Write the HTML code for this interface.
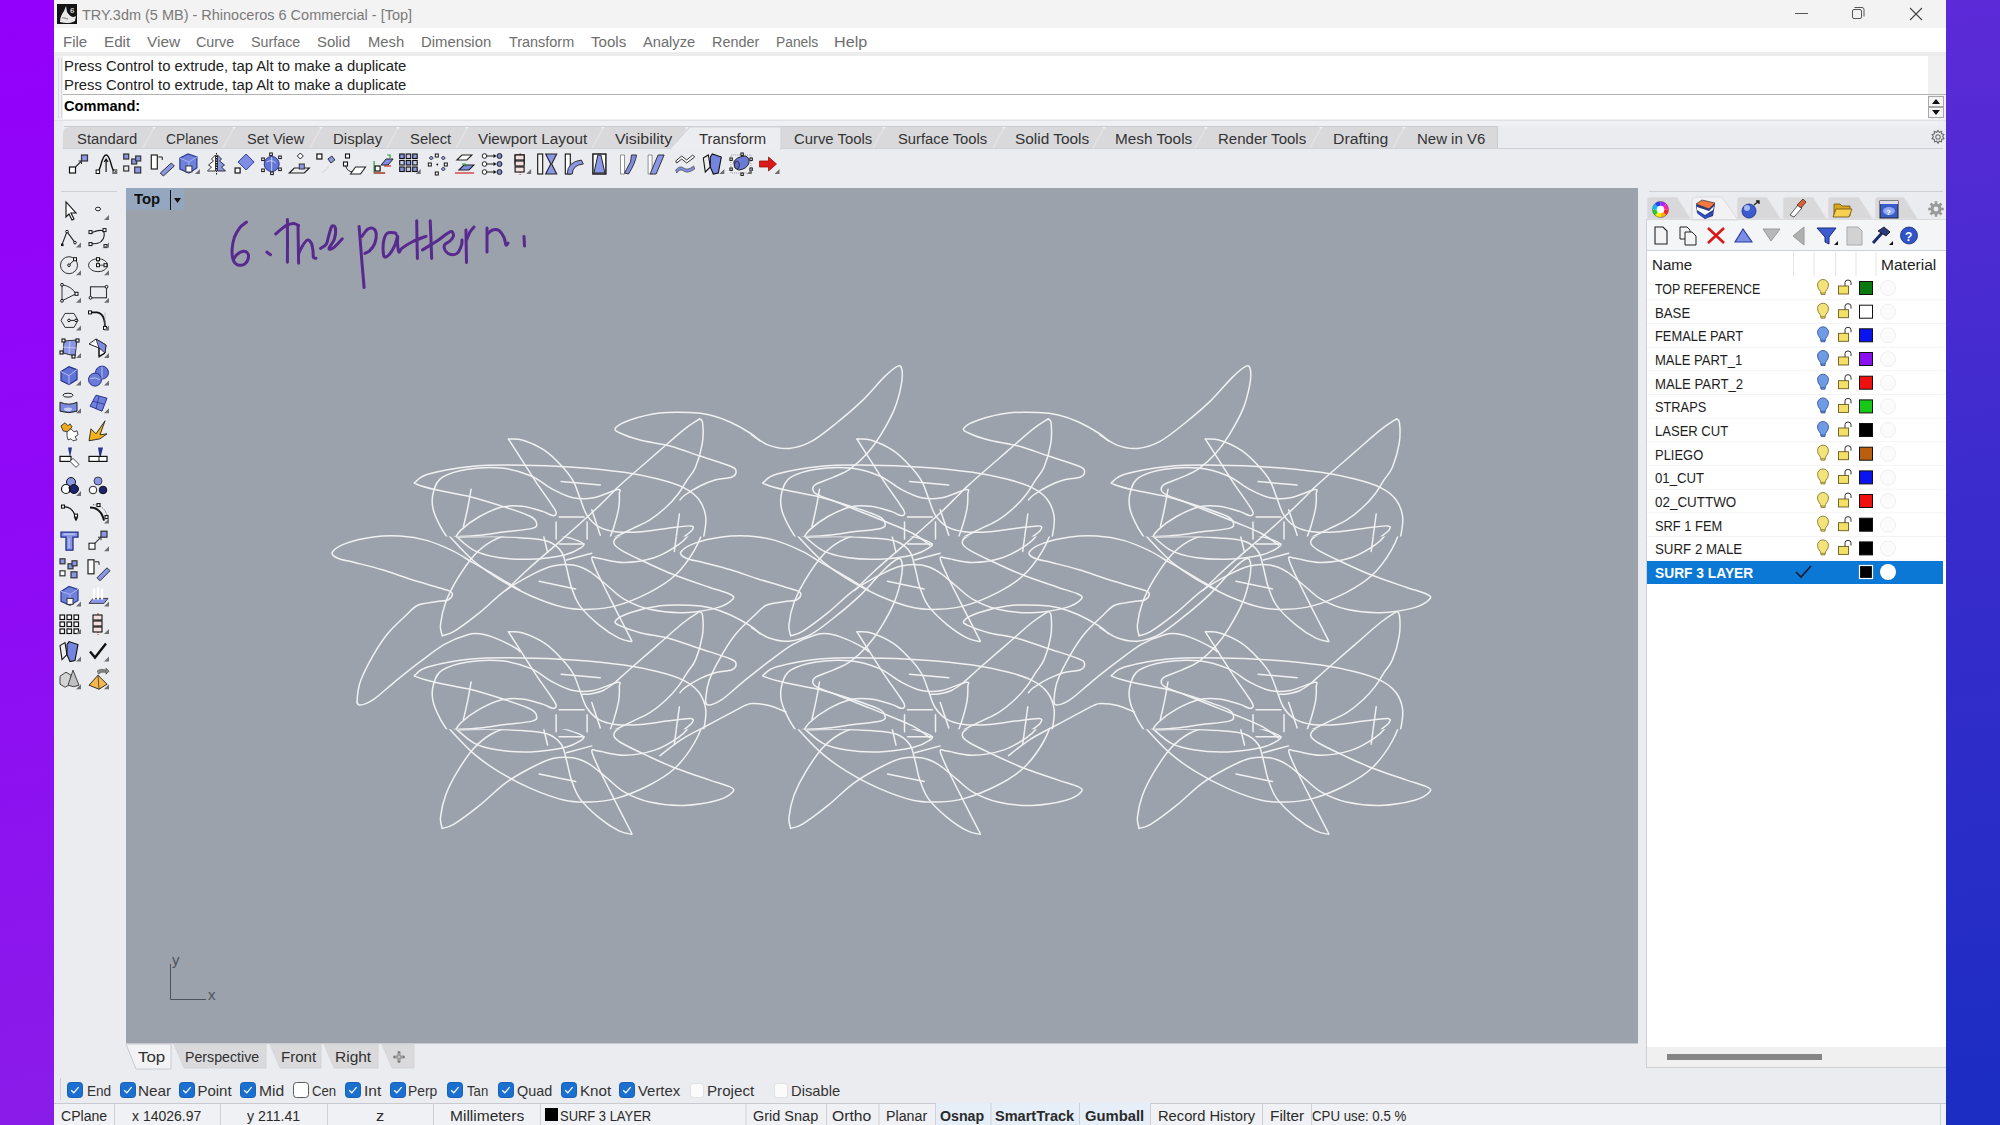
<!DOCTYPE html>
<html><head><meta charset="utf-8">
<style>
*{box-sizing:border-box}
html,body{margin:0;padding:0}
body{width:2000px;height:1125px;overflow:hidden;position:relative;background:#ebecf0;font-family:'Liberation Sans',sans-serif}
.a{position:absolute}
.t{position:absolute;white-space:pre;line-height:1;transform-origin:0 0;font-family:'Liberation Sans',sans-serif}
svg{position:absolute;overflow:visible}
</style></head><body>
<!-- borders -->
<div class="a" style="left:0;top:0;width:54px;height:1125px;background:linear-gradient(170deg,#9300fb 0%,#8f0af6 50%,#8a1ce8 100%)"></div>
<div class="a" style="left:1946px;top:0;width:54px;height:1125px;background:linear-gradient(175deg,#5d2ad8 0%,#3a2ccc 45%,#1a2dc2 100%)"></div>
<!-- title bar -->
<div class="a" style="left:54px;top:0;width:1892px;height:28px;background:#f3f3f3"></div>
<!-- menu -->
<div class="a" style="left:54px;top:28px;width:1892px;height:24px;background:#ffffff"></div>
<div class="a" style="left:54px;top:52px;width:1892px;height:4px;background:#ececec"></div>
<!-- command area -->
<div class="a" style="left:54px;top:56px;width:1892px;height:64px;background:#eef0f4"></div>
<div class="a" style="left:63px;top:56px;width:1865px;height:38px;background:#ffffff"></div>
<div class="a" style="left:1928px;top:56px;width:18px;height:38px;background:#f0f0f0"></div>
<div class="a" style="left:63px;top:94px;width:1883px;height:1px;background:#b2b2b2"></div>
<div class="a" style="left:63px;top:95px;width:1865px;height:24px;background:#ffffff"></div>
<div class="a" style="left:58px;top:58px;width:1px;height:60px;background:#d8d8e0"></div>
<div class="a" style="left:61px;top:58px;width:1px;height:60px;background:#d8d8e0"></div>
<!-- toolbar tabs strip -->
<div class="a" style="left:54px;top:120px;width:1892px;height:68px;background:#ebecf0"></div>
<div class="a" style="left:63px;top:148px;width:1880px;height:1px;background:#d6d6d8"></div>
<svg style="left:0;top:0" width="2000" height="1125"><rect x="54" y="120" width="1892" height="1" fill="#dfe1e6"/><rect x="63" y="121" width="1880" height="5" fill="#eef0f4"/><rect x="64" y="126" width="1434" height="1" fill="#c9cbd0"/><path d="M63 148 L63 133 Q64 127 70 127 H1498 V148 Z" fill="#d9d9dc"/><path d="M143 148 L154 128" stroke="#e2e2e5" stroke-width="1.6"/><path d="M152 127 L154 129 L156 127 Z" fill="#eef0f4"/><path d="M223 148 L234 128" stroke="#e2e2e5" stroke-width="1.6"/><path d="M232 127 L234 129 L236 127 Z" fill="#eef0f4"/><path d="M310 148 L321 128" stroke="#e2e2e5" stroke-width="1.6"/><path d="M319 127 L321 129 L323 127 Z" fill="#eef0f4"/><path d="M387 148 L398 128" stroke="#e2e2e5" stroke-width="1.6"/><path d="M396 127 L398 129 L400 127 Z" fill="#eef0f4"/><path d="M456 148 L467 128" stroke="#e2e2e5" stroke-width="1.6"/><path d="M465 127 L467 129 L469 127 Z" fill="#eef0f4"/><path d="M592 148 L603 128" stroke="#e2e2e5" stroke-width="1.6"/><path d="M601 127 L603 129 L605 127 Z" fill="#eef0f4"/><path d="M676 148 L687 128" stroke="#e2e2e5" stroke-width="1.6"/><path d="M685 127 L687 129 L689 127 Z" fill="#eef0f4"/><path d="M873 148 L884 128" stroke="#e2e2e5" stroke-width="1.6"/><path d="M882 127 L884 129 L886 127 Z" fill="#eef0f4"/><path d="M993 148 L1004 128" stroke="#e2e2e5" stroke-width="1.6"/><path d="M1002 127 L1004 129 L1006 127 Z" fill="#eef0f4"/><path d="M1093 148 L1104 128" stroke="#e2e2e5" stroke-width="1.6"/><path d="M1102 127 L1104 129 L1106 127 Z" fill="#eef0f4"/><path d="M1195 148 L1206 128" stroke="#e2e2e5" stroke-width="1.6"/><path d="M1204 127 L1206 129 L1208 127 Z" fill="#eef0f4"/><path d="M1310 148 L1321 128" stroke="#e2e2e5" stroke-width="1.6"/><path d="M1319 127 L1321 129 L1323 127 Z" fill="#eef0f4"/><path d="M1393 148 L1404 128" stroke="#e2e2e5" stroke-width="1.6"/><path d="M1402 127 L1404 129 L1406 127 Z" fill="#eef0f4"/><path d="M1497.5 127 V148" stroke="#c9cbd0" stroke-width="1"/><path d="M670 149 L690 127 H781 V149 Z" fill="#ecedf1" stroke="#d0d2d8" stroke-width="1"/><rect x="63" y="148" width="1880" height="1" fill="#cdd0d6"/><rect x="671" y="148" width="109" height="2" fill="#ecedf1"/><g transform="translate(1938 137)" fill="none" stroke="#6b6b6b" stroke-width="1.1"><circle r="2.2"/><path d="M0 -6.5 L1.3 -4.6 L3.6 -5.6 L3.6 -3.2 L5.9 -2.4 L4.6 -0.5 L6 1.6 L3.7 2.4 L3.5 4.8 L1.3 4.2 L0 6.3 L-1.3 4.2 L-3.5 4.8 L-3.7 2.4 L-6 1.6 L-4.6 -0.5 L-5.9 -2.4 L-3.6 -3.2 L-3.6 -5.6 L-1.3 -4.6 Z"/></g></svg>
<!-- viewport -->
<div class="a" style="left:126px;top:188px;width:1512px;height:855px;background:#9ca2ab"></div>
<div class="a" style="left:126px;top:188px;width:58px;height:22px;background:#94a7bf"></div>
<div class="a" style="left:170px;top:190px;width:1px;height:20px;background:#111"></div>
<svg style="left:0;top:0" width="2000" height="1125"><path d="M174 198 L181 198 L177.5 203 Z" fill="#111"/></svg>
<svg style="left:0;top:0" width="2000" height="1125">
<defs><clipPath id="pc0"><rect x="0" y="0.0" width="2000" height="536.5"/></clipPath><clipPath id="pc1"><rect x="0" y="536.5" width="2000" height="588.5"/></clipPath><clipPath id="pc4"><rect x="0" y="0.0" width="2000" height="536.5"/></clipPath><clipPath id="pc5"><rect x="0" y="536.5" width="2000" height="588.5"/></clipPath><clipPath id="pc8"><rect x="0" y="0.0" width="2000" height="536.5"/></clipPath><clipPath id="pc9"><rect x="0" y="536.5" width="2000" height="588.5"/></clipPath><clipPath id="pc12"><rect x="0" y="0.0" width="2000" height="729.2"/></clipPath><clipPath id="pc13"><rect x="0" y="729.2" width="2000" height="395.8"/></clipPath><clipPath id="pc16"><rect x="0" y="0.0" width="2000" height="729.2"/></clipPath><clipPath id="pc17"><rect x="0" y="729.2" width="2000" height="395.8"/></clipPath><clipPath id="pc20"><rect x="0" y="0.0" width="2000" height="729.2"/></clipPath><clipPath id="pc21"><rect x="0" y="729.2" width="2000" height="395.8"/></clipPath><clipPath id="vpc"><rect x="126" y="188" width="1512" height="855"/></clipPath></defs>
<g clip-path="url(#vpc)">
<g fill="none" stroke="#f0f1f3" stroke-width="1.5" stroke-linecap="round" stroke-linejoin="round"><g clip-path="url(#pc0)"><path d="M508.5 439.1 C510.8 439.3 516.2 438.2 522.1 440.0 C528.0 441.8 537.7 445.9 544.2 450.2 C550.7 454.4 556.4 460.4 561.2 465.5 C566.0 470.6 570.0 475.4 573.1 480.8 C576.2 486.2 577.6 492.1 579.9 497.8 C582.2 503.5 583.6 510.0 586.7 514.8 C589.8 519.6 593.8 523.9 598.6 526.7 C603.4 529.5 608.5 530.9 615.6 531.8 C622.7 532.6 632.6 532.4 641.1 531.8 C649.6 531.2 658.4 529.4 666.6 528.4 C674.8 527.4 686.1 525.6 690.4 525.9 C694.6 526.1 693.5 528.0 692.1 530.1 C690.7 532.2 684.7 536.1 681.9 538.6 C679.1 541.1 676.2 544.0 675.1 545.1"/><path d="M508.5 439.1 C510.8 442.7 517.3 452.9 522.1 460.4 C526.9 467.9 532.9 477.4 537.4 484.2 C541.9 491.0 546.2 496.5 549.3 501.2 C552.4 505.9 555.5 509.8 556.1 512.2 C556.7 514.7 555.0 515.8 552.7 515.6 C550.4 515.5 547.6 513.0 542.5 511.4 C537.4 509.8 528.9 507.0 522.1 506.3 C515.3 505.6 508.8 505.4 501.7 507.1 C494.6 508.8 486.4 512.7 479.6 516.5 C472.8 520.3 465.1 526.1 460.9 530.1 C456.6 534.1 455.2 538.6 454.1 540.3"/><path d="M454.1 536.9 C458.4 536.6 471.1 536.1 479.6 535.2 C488.1 534.4 496.3 532.9 505.1 531.8 C513.9 530.7 527.1 529.8 532.3 528.4 C537.5 527.0 536.8 525.3 536.6 523.3 C536.3 521.3 535.8 519.2 530.6 516.5 C525.4 513.8 515.0 510.4 505.1 507.1 C495.2 503.9 482.4 499.8 471.1 496.9 C459.8 494.1 446.2 492.3 437.1 490.1 C428.0 488.0 420.2 485.6 416.7 484.2 C413.2 482.8 413.9 483.3 415.9 481.6 C417.8 479.9 419.4 476.6 428.6 474.0 C437.8 471.4 455.5 467.8 471.1 466.4 C486.7 464.9 505.1 465.0 522.1 465.2 C539.1 465.3 556.1 466.0 573.1 467.2 C590.1 468.4 609.9 470.3 624.1 472.3 C638.3 474.3 648.2 476.6 658.1 479.1 C668.0 481.7 676.8 484.2 683.6 487.6 C690.4 491.0 695.2 494.7 698.9 499.5 C702.6 504.3 704.8 510.6 705.7 516.5 C706.5 522.5 704.9 530.4 704.0 535.2 C703.2 540.0 701.2 543.4 700.6 545.1"/><path d="M452.4 545.1 C450.4 542.0 443.8 532.9 440.5 526.7 C437.2 520.5 434.0 514.0 432.9 508.0 C431.7 502.1 432.1 496.1 433.7 491.0 C435.3 485.9 436.5 481.0 442.2 477.4 C447.9 473.8 457.8 470.8 467.7 469.2 C477.6 467.7 491.2 467.0 501.7 468.1 C512.2 469.1 522.1 472.2 530.6 475.7 C539.1 479.2 545.6 485.6 552.7 489.3 C559.8 493.0 566.3 496.4 573.1 497.8 C579.9 499.2 586.0 499.2 593.5 497.8 C601.0 496.4 613.5 490.2 617.8 489.6 C622.1 489.1 619.2 491.3 619.3 494.4 C619.5 497.5 619.6 502.6 618.7 508.0 C617.8 513.4 615.8 520.5 613.9 526.7 C612.0 532.9 608.2 542.0 607.1 545.1"/><path d="M699.8 418.8 C697.1 420.6 690.5 424.3 683.6 429.8 C676.7 435.3 666.6 444.5 658.1 451.9 C649.6 459.3 639.7 467.8 632.6 474.0 C625.5 480.2 618.4 486.7 615.6 489.3"/><path d="M699.8 418.8 C700.2 419.5 702.2 418.9 702.6 423.0 C703.1 427.1 703.5 436.0 702.3 443.4 C701.1 450.8 698.1 461.1 695.5 467.2 C693.0 473.3 689.9 475.7 687.0 480.1 C684.1 484.5 681.8 489.2 678.3 493.7 C674.8 498.3 670.7 503.0 665.9 507.3 C661.2 511.7 655.5 516.4 649.9 519.9 C644.4 523.4 638.3 525.7 632.4 528.6 C626.6 531.5 618.7 535.3 614.9 537.2 C611.2 539.2 611.9 539.0 610.0 540.3 C608.1 541.6 604.7 544.3 603.7 545.1"/><path d="M471.1 489.3 C470.5 492.4 469.0 501.8 467.7 508.0 C466.4 514.2 464.2 523.6 463.4 526.7"/><path d="M561.2 481.6 L600.3 485.0"/><path d="M591.8 509.7 L600.3 535.2"/><path d="M679.4 514.0 L675.1 545.1"/></g><g clip-path="url(#pc1)"><path d="M433.7 507.3 C434.8 510.1 437.1 518.6 440.5 524.3 C443.9 530.0 448.4 535.1 454.1 541.3 C459.8 547.5 467.1 555.5 474.5 561.7 C481.9 567.9 489.0 573.0 498.3 578.7 C507.7 584.4 519.6 590.9 530.6 595.7 C541.6 600.5 554.7 605.3 564.6 607.6 C574.5 609.9 581.6 609.6 590.1 609.3 C598.6 609.0 605.7 608.7 615.6 605.9 C625.5 603.1 639.7 597.4 649.6 592.3 C659.5 587.2 667.6 582.4 675.1 575.3 C682.6 568.2 689.7 558.3 694.6 549.8 C699.6 541.3 702.9 531.4 704.9 524.3 C706.8 517.2 706.3 510.1 706.6 507.3"/><path d="M459.2 534.5 C462.6 532.5 471.9 525.7 479.6 522.6 C487.3 519.5 497.4 516.6 505.1 515.8 C512.8 514.9 520.4 516.2 525.5 517.5 C530.6 518.8 534.4 521.5 535.7 523.5 C537.0 525.4 536.8 527.8 533.1 529.4 C529.5 531.0 520.5 530.8 513.6 532.8 C506.7 534.8 498.0 537.6 491.5 541.3 C485.0 545.0 480.2 548.7 474.5 554.9 C468.8 561.1 462.3 570.8 457.5 578.7 C452.7 586.6 448.4 594.9 445.6 602.5 C442.8 610.1 441.1 619.1 440.5 624.6 C439.9 630.1 441.9 633.8 442.2 635.7"/><path d="M442.2 635.7 C444.2 634.9 447.9 635.2 454.1 631.4 C460.3 627.6 471.1 619.5 479.6 612.7 C488.1 605.9 496.6 596.8 505.1 590.6 C513.6 584.4 522.7 579.4 530.6 575.3 C538.5 571.2 545.6 567.7 552.7 566.0 C559.8 564.2 566.9 564.1 573.1 565.1 C579.3 566.1 584.4 568.5 590.1 571.9 C595.8 575.3 601.4 581.0 607.1 585.5 C612.8 590.0 617.0 595.1 624.1 599.1 C631.2 603.1 639.7 607.0 649.6 609.3 C659.5 611.6 672.3 613.0 683.6 612.7 C694.9 612.4 709.4 609.9 717.6 607.6 C725.8 605.3 730.9 601.4 732.9 599.1 C734.9 596.8 733.5 596.0 729.5 594.0 C725.5 592.0 718.2 590.3 709.1 587.2 C700.0 584.1 685.9 579.5 675.1 575.3 C664.3 571.0 653.6 566.0 644.5 561.7 C635.4 557.5 625.8 552.9 620.7 549.8 C615.6 546.7 614.2 545.3 613.9 543.0 C613.6 540.7 614.5 538.2 619.0 536.2 C623.5 534.2 633.2 532.5 641.1 531.1 C649.0 529.7 658.1 528.6 666.6 527.7 C675.1 526.9 687.9 526.3 692.1 526.0"/><path d="M692.1 526.0 C691.8 527.1 692.7 529.7 690.4 532.8 C688.1 535.9 684.5 540.6 678.5 544.7 C672.6 548.8 663.8 554.5 654.7 557.5 C645.6 560.4 633.5 562.4 624.1 562.5 C614.8 562.7 604.0 559.0 598.6 558.3 C593.2 557.6 591.8 555.5 591.8 558.3 C591.8 561.1 594.6 566.8 598.6 575.3 C602.6 583.8 610.1 598.4 615.6 609.3 C621.1 620.2 629.1 635.5 631.8 640.8"/><path d="M459.2 537.0 C464.0 537.0 477.6 536.4 488.1 536.5 C498.6 536.7 512.2 537.1 522.1 537.9 C532.0 538.7 541.1 539.0 547.6 541.3 C554.1 543.6 558.1 547.2 561.2 551.5 C564.3 555.8 564.6 560.8 566.3 566.8 C568.0 572.8 569.1 580.7 571.4 587.2 C573.7 593.7 575.4 599.7 579.9 605.9 C584.4 612.1 592.1 619.2 598.6 624.6 C605.1 630.0 613.5 635.4 619.0 638.2 C624.5 641.0 629.6 641.0 631.8 641.6"/><path d="M403.1 510.7 C405.9 510.9 414.4 510.6 420.1 512.1 C425.8 513.5 431.4 515.5 437.1 519.2 C442.8 522.9 447.9 529.3 454.1 534.5 C460.3 539.7 467.1 546.8 474.5 550.7 C481.9 554.5 489.0 556.0 498.3 557.5 C507.7 558.9 519.6 559.6 530.6 559.2 C541.6 558.7 556.1 556.9 564.6 554.9 C573.1 552.9 578.6 549.2 581.6 547.2 C584.6 545.3 584.4 544.6 582.4 543.0 C580.5 541.4 576.9 540.2 569.7 537.9 C562.5 535.6 549.3 532.5 539.1 529.4 C528.9 526.3 517.6 522.3 508.5 519.2 C499.4 516.1 490.4 512.7 484.7 510.7 C479.0 508.7 476.2 507.9 474.5 507.3"/><path d="M464.3 507.3 L462.6 526.0"/><path d="M539.1 581.2 L575.6 588.9"/><path d="M566.3 560.0 L591.8 553.2"/><path d="M541.6 527.7 L547.6 552.3"/><path d="M591.8 510.7 L600.3 535.3"/><path d="M679.4 514.1 L674.3 551.5"/><path d="M579.9 507.3 C581.6 509.6 585.6 517.2 590.1 520.9 C594.6 524.6 600.9 527.7 607.1 529.4 C613.3 531.1 620.4 531.9 627.5 531.1 C634.6 530.2 643.1 527.4 649.6 524.3 C656.1 521.2 662.4 515.2 666.6 512.4 C670.9 509.6 673.7 508.2 675.1 507.3"/></g><path d="M559.1 517.0 L584.1 517.0"/><path d="M559.1 544.0 L584.1 544.0"/><path d="M556.1 522.0 L556.1 539.0"/><path d="M587.1 522.0 L587.1 539.0"/><path d="M615.6 489.5 C614.3 490.8 611.9 493.3 607.6 497.5 C603.3 501.7 599.0 506.3 590.0 514.5 C581.0 522.7 564.2 537.6 553.6 546.9 C543.0 556.2 534.5 563.2 526.6 570.5 C518.7 577.8 509.4 587.2 506.0 590.5"/><g clip-path="url(#pc4)"><path d="M857.0 439.1 C859.2 439.3 864.6 438.2 870.5 440.0 C876.5 441.8 886.1 445.9 892.6 450.2 C899.2 454.4 904.8 460.4 909.6 465.5 C914.5 470.6 918.4 475.4 921.5 480.8 C924.7 486.2 926.1 492.1 928.3 497.8 C930.6 503.5 932.0 510.0 935.1 514.8 C938.3 519.6 942.2 523.9 947.0 526.7 C951.9 529.5 957.0 530.9 964.0 531.8 C971.1 532.6 981.0 532.4 989.5 531.8 C998.0 531.2 1006.8 529.4 1015.0 528.4 C1023.3 527.4 1034.6 525.6 1038.8 525.9 C1043.1 526.1 1042.0 528.0 1040.5 530.1 C1039.1 532.2 1033.2 536.1 1030.3 538.6 C1027.5 541.1 1024.7 544.0 1023.5 545.1"/><path d="M857.0 439.1 C859.2 442.7 865.7 452.9 870.5 460.4 C875.4 467.9 881.3 477.4 885.8 484.2 C890.4 491.0 894.6 496.5 897.8 501.2 C900.9 505.9 904.0 509.8 904.5 512.2 C905.1 514.7 903.4 515.8 901.1 515.6 C898.9 515.5 896.1 513.0 891.0 511.4 C885.9 509.8 877.4 507.0 870.5 506.3 C863.7 505.6 857.2 505.4 850.1 507.1 C843.1 508.8 834.8 512.7 828.0 516.5 C821.2 520.3 813.6 526.1 809.3 530.1 C805.1 534.1 803.7 538.6 802.5 540.3"/><path d="M802.5 536.9 C806.8 536.6 819.5 536.1 828.0 535.2 C836.5 534.4 844.8 532.9 853.5 531.8 C862.3 530.7 875.5 529.8 880.8 528.4 C886.0 527.0 885.3 525.3 885.0 523.3 C884.7 521.3 884.3 519.2 879.0 516.5 C873.8 513.8 863.5 510.4 853.5 507.1 C843.6 503.9 830.9 499.8 819.5 496.9 C808.2 494.1 794.6 492.3 785.5 490.1 C776.5 488.0 768.7 485.6 765.1 484.2 C761.6 482.8 762.3 483.3 764.3 481.6 C766.3 479.9 767.8 476.6 777.0 474.0 C786.3 471.4 804.0 467.8 819.5 466.4 C835.1 464.9 853.5 465.0 870.5 465.2 C887.5 465.3 904.5 466.0 921.5 467.2 C938.5 468.4 958.4 470.3 972.5 472.3 C986.7 474.3 996.6 476.6 1006.5 479.1 C1016.5 481.7 1025.2 484.2 1032.0 487.6 C1038.8 491.0 1043.7 494.7 1047.3 499.5 C1051.0 504.3 1053.3 510.6 1054.1 516.5 C1055.0 522.5 1053.3 530.4 1052.5 535.2 C1051.6 540.0 1049.6 543.4 1049.0 545.1"/><path d="M800.8 545.1 C798.9 542.0 792.2 532.9 789.0 526.7 C785.7 520.5 782.4 514.0 781.3 508.0 C780.2 502.1 780.6 496.1 782.1 491.0 C783.7 485.9 785.0 481.0 790.6 477.4 C796.3 473.8 806.2 470.8 816.1 469.2 C826.1 467.7 839.7 467.0 850.1 468.1 C860.6 469.1 870.5 472.2 879.0 475.7 C887.5 479.2 894.1 485.6 901.1 489.3 C908.2 493.0 914.7 496.4 921.5 497.8 C928.4 499.2 934.5 499.2 942.0 497.8 C949.4 496.4 962.0 490.2 966.3 489.6 C970.6 489.1 967.6 491.3 967.8 494.4 C967.9 497.5 968.0 502.6 967.1 508.0 C966.2 513.4 964.3 520.5 962.3 526.7 C960.4 532.9 956.7 542.0 955.5 545.1"/><path d="M1048.2 418.8 C1045.5 420.6 1039.0 424.3 1032.0 429.8 C1025.1 435.3 1015.0 444.5 1006.5 451.9 C998.0 459.3 988.1 467.8 981.0 474.0 C974.0 480.2 966.9 486.7 964.0 489.3"/><path d="M1048.2 418.8 C1048.7 419.5 1050.7 418.9 1051.1 423.0 C1051.5 427.1 1051.9 436.0 1050.8 443.4 C1049.6 450.8 1046.5 461.1 1044.0 467.2 C1041.4 473.3 1038.3 475.7 1035.5 480.1 C1032.6 484.5 1030.3 489.2 1026.8 493.7 C1023.3 498.3 1019.1 503.0 1014.4 507.3 C1009.6 511.7 1004.0 516.4 998.4 519.9 C992.8 523.4 986.7 525.7 980.9 528.6 C975.0 531.5 967.1 535.3 963.4 537.2 C959.6 539.2 960.3 539.0 958.4 540.3 C956.6 541.6 953.2 544.3 952.1 545.1"/><path d="M819.5 489.3 C819.0 492.4 817.4 501.8 816.1 508.0 C814.9 514.2 812.6 523.6 811.9 526.7"/><path d="M909.6 481.6 L948.8 485.0"/><path d="M940.2 509.7 L948.8 535.2"/><path d="M1027.8 514.0 L1023.5 545.1"/></g><g clip-path="url(#pc5)"><path d="M782.1 507.3 C783.3 510.1 785.6 518.6 789.0 524.3 C792.4 530.0 796.9 535.1 802.5 541.3 C808.2 547.5 815.6 555.5 823.0 561.7 C830.3 567.9 837.4 573.0 846.8 578.7 C856.1 584.4 868.0 590.9 879.0 595.7 C890.1 600.5 903.1 605.3 913.0 607.6 C923.0 609.9 930.0 609.6 938.5 609.3 C947.0 609.0 954.1 608.7 964.0 605.9 C974.0 603.1 988.1 597.4 998.0 592.3 C1008.0 587.2 1016.0 582.4 1023.5 575.3 C1031.1 568.2 1038.1 558.3 1043.1 549.8 C1048.1 541.3 1051.3 531.4 1053.3 524.3 C1055.3 517.2 1054.7 510.1 1055.0 507.3"/><path d="M807.6 534.5 C811.0 532.5 820.4 525.7 828.0 522.6 C835.7 519.5 845.9 516.6 853.5 515.8 C861.2 514.9 868.9 516.2 874.0 517.5 C879.1 518.8 882.9 521.5 884.1 523.5 C885.4 525.4 885.3 527.8 881.6 529.4 C877.9 531.0 869.0 530.8 862.0 532.8 C855.1 534.8 846.5 537.6 840.0 541.3 C833.4 545.0 828.6 548.7 823.0 554.9 C817.3 561.1 810.8 570.8 806.0 578.7 C801.1 586.6 796.9 594.9 794.0 602.5 C791.2 610.1 789.5 619.1 789.0 624.6 C788.4 630.1 790.4 633.8 790.6 635.7"/><path d="M790.6 635.7 C792.6 634.9 796.3 635.2 802.5 631.4 C808.8 627.6 819.5 619.5 828.0 612.7 C836.5 605.9 845.0 596.8 853.5 590.6 C862.0 584.4 871.1 579.4 879.0 575.3 C887.0 571.2 894.1 567.7 901.1 566.0 C908.2 564.2 915.3 564.1 921.5 565.1 C927.8 566.1 932.9 568.5 938.5 571.9 C944.2 575.3 949.9 581.0 955.5 585.5 C961.2 590.0 965.5 595.1 972.5 599.1 C979.6 603.1 988.1 607.0 998.0 609.3 C1008.0 611.6 1020.7 613.0 1032.0 612.7 C1043.4 612.4 1057.8 609.9 1066.0 607.6 C1074.3 605.3 1079.4 601.4 1081.3 599.1 C1083.3 596.8 1081.9 596.0 1078.0 594.0 C1074.0 592.0 1066.6 590.3 1057.5 587.2 C1048.5 584.1 1034.3 579.5 1023.5 575.3 C1012.8 571.0 1002.0 566.0 993.0 561.7 C983.9 557.5 974.2 552.9 969.1 549.8 C964.0 546.7 962.6 545.3 962.3 543.0 C962.1 540.7 962.9 538.2 967.5 536.2 C972.0 534.2 981.6 532.5 989.5 531.1 C997.5 529.7 1006.5 528.6 1015.0 527.7 C1023.5 526.9 1036.3 526.3 1040.5 526.0"/><path d="M1040.5 526.0 C1040.3 527.1 1041.1 529.7 1038.8 532.8 C1036.6 535.9 1032.9 540.6 1027.0 544.7 C1021.0 548.8 1012.2 554.5 1003.1 557.5 C994.1 560.4 981.9 562.4 972.5 562.5 C963.2 562.7 952.4 559.0 947.0 558.3 C941.7 557.6 940.2 555.5 940.2 558.3 C940.2 561.1 943.1 566.8 947.0 575.3 C951.0 583.8 958.5 598.4 964.0 609.3 C969.6 620.2 977.5 635.5 980.2 640.8"/><path d="M807.6 537.0 C812.5 537.0 826.1 536.4 836.5 536.5 C847.0 536.7 860.6 537.1 870.5 537.9 C880.5 538.7 889.5 539.0 896.0 541.3 C902.6 543.6 906.5 547.2 909.6 551.5 C912.8 555.8 913.0 560.8 914.8 566.8 C916.5 572.8 917.6 580.7 919.8 587.2 C922.1 593.7 923.8 599.7 928.3 605.9 C932.9 612.1 940.5 619.2 947.0 624.6 C953.6 630.0 961.9 635.4 967.5 638.2 C973.0 641.0 978.1 641.0 980.2 641.6"/><path d="M751.5 510.7 C754.4 510.9 762.9 510.6 768.5 512.1 C774.2 513.5 779.9 515.5 785.5 519.2 C791.2 522.9 796.3 529.3 802.5 534.5 C808.8 539.7 815.6 546.8 823.0 550.7 C830.3 554.5 837.4 556.0 846.8 557.5 C856.1 558.9 868.0 559.6 879.0 559.2 C890.1 558.7 904.5 556.9 913.0 554.9 C921.5 552.9 927.1 549.2 930.0 547.2 C933.0 545.3 932.9 544.6 930.9 543.0 C928.9 541.4 925.4 540.2 918.1 537.9 C910.9 535.6 897.7 532.5 887.5 529.4 C877.4 526.3 866.0 522.3 857.0 519.2 C847.9 516.1 838.8 512.7 833.1 510.7 C827.5 508.7 824.6 507.9 823.0 507.3"/><path d="M812.8 507.3 L811.0 526.0"/><path d="M887.5 581.2 L924.1 588.9"/><path d="M914.8 560.0 L940.2 553.2"/><path d="M890.1 527.7 L896.0 552.3"/><path d="M940.2 510.7 L948.8 535.3"/><path d="M1027.8 514.1 L1022.7 551.5"/><path d="M928.3 507.3 C930.0 509.6 934.0 517.2 938.5 520.9 C943.1 524.6 949.3 527.7 955.5 529.4 C961.8 531.1 968.9 531.9 976.0 531.1 C983.0 530.2 991.5 527.4 998.0 524.3 C1004.6 521.2 1010.8 515.2 1015.0 512.4 C1019.3 509.6 1022.1 508.2 1023.5 507.3"/></g><path d="M907.5 517.0 L932.5 517.0"/><path d="M907.5 544.0 L932.5 544.0"/><path d="M904.5 522.0 L904.5 539.0"/><path d="M935.5 522.0 L935.5 539.0"/><path d="M964.0 489.5 C962.7 490.8 960.3 493.3 956.0 497.5 C951.8 501.7 947.5 506.3 938.5 514.5 C929.5 522.7 912.6 537.6 902.0 546.9 C891.5 556.2 883.0 563.2 875.0 570.5 C867.1 577.8 857.9 587.2 854.5 590.5"/><g clip-path="url(#pc8)"><path d="M1205.4 439.1 C1207.7 439.3 1213.0 438.2 1219.0 440.0 C1225.0 441.8 1234.6 445.9 1241.1 450.2 C1247.6 454.4 1253.3 460.4 1258.1 465.5 C1262.9 470.6 1266.9 475.4 1270.0 480.8 C1273.1 486.2 1274.5 492.1 1276.8 497.8 C1279.1 503.5 1280.5 510.0 1283.6 514.8 C1286.7 519.6 1290.7 523.9 1295.5 526.7 C1300.3 529.5 1305.4 530.9 1312.5 531.8 C1319.6 532.6 1329.5 532.4 1338.0 531.8 C1346.5 531.2 1355.3 529.4 1363.5 528.4 C1371.7 527.4 1383.0 525.6 1387.3 525.9 C1391.5 526.1 1390.4 528.0 1389.0 530.1 C1387.6 532.2 1381.6 536.1 1378.8 538.6 C1376.0 541.1 1373.1 544.0 1372.0 545.1"/><path d="M1205.4 439.1 C1207.7 442.7 1214.2 452.9 1219.0 460.4 C1223.8 467.9 1229.8 477.4 1234.3 484.2 C1238.8 491.0 1243.1 496.5 1246.2 501.2 C1249.3 505.9 1252.4 509.8 1253.0 512.2 C1253.6 514.7 1251.9 515.8 1249.6 515.6 C1247.3 515.5 1244.5 513.0 1239.4 511.4 C1234.3 509.8 1225.8 507.0 1219.0 506.3 C1212.2 505.6 1205.7 505.4 1198.6 507.1 C1191.5 508.8 1183.3 512.7 1176.5 516.5 C1169.7 520.3 1162.0 526.1 1157.8 530.1 C1153.5 534.1 1152.1 538.6 1151.0 540.3"/><path d="M1151.0 536.9 C1155.2 536.6 1168.0 536.1 1176.5 535.2 C1185.0 534.4 1193.2 532.9 1202.0 531.8 C1210.8 530.7 1224.0 529.8 1229.2 528.4 C1234.4 527.0 1233.7 525.3 1233.5 523.3 C1233.2 521.3 1232.7 519.2 1227.5 516.5 C1222.3 513.8 1211.9 510.4 1202.0 507.1 C1192.1 503.9 1179.3 499.8 1168.0 496.9 C1156.7 494.1 1143.1 492.3 1134.0 490.1 C1124.9 488.0 1117.1 485.6 1113.6 484.2 C1110.1 482.8 1110.8 483.3 1112.8 481.6 C1114.7 479.9 1116.3 476.6 1125.5 474.0 C1134.7 471.4 1152.4 467.8 1168.0 466.4 C1183.6 464.9 1202.0 465.0 1219.0 465.2 C1236.0 465.3 1253.0 466.0 1270.0 467.2 C1287.0 468.4 1306.8 470.3 1321.0 472.3 C1335.2 474.3 1345.1 476.6 1355.0 479.1 C1364.9 481.7 1373.7 484.2 1380.5 487.6 C1387.3 491.0 1392.1 494.7 1395.8 499.5 C1399.5 504.3 1401.8 510.6 1402.6 516.5 C1403.4 522.5 1401.8 530.4 1400.9 535.2 C1400.1 540.0 1398.1 543.4 1397.5 545.1"/><path d="M1149.3 545.1 C1147.3 542.0 1140.7 532.9 1137.4 526.7 C1134.1 520.5 1130.9 514.0 1129.8 508.0 C1128.6 502.1 1129.0 496.1 1130.6 491.0 C1132.2 485.9 1133.4 481.0 1139.1 477.4 C1144.8 473.8 1154.7 470.8 1164.6 469.2 C1174.5 467.7 1188.1 467.0 1198.6 468.1 C1209.1 469.1 1219.0 472.2 1227.5 475.7 C1236.0 479.2 1242.5 485.6 1249.6 489.3 C1256.7 493.0 1263.2 496.4 1270.0 497.8 C1276.8 499.2 1282.9 499.2 1290.4 497.8 C1297.9 496.4 1310.4 490.2 1314.7 489.6 C1319.0 489.1 1316.1 491.3 1316.2 494.4 C1316.4 497.5 1316.5 502.6 1315.6 508.0 C1314.7 513.4 1312.7 520.5 1310.8 526.7 C1308.9 532.9 1305.1 542.0 1304.0 545.1"/><path d="M1396.7 418.8 C1394.0 420.6 1387.4 424.3 1380.5 429.8 C1373.6 435.3 1363.5 444.5 1355.0 451.9 C1346.5 459.3 1336.6 467.8 1329.5 474.0 C1322.4 480.2 1315.3 486.7 1312.5 489.3"/><path d="M1396.7 418.8 C1397.1 419.5 1399.1 418.9 1399.5 423.0 C1400.0 427.1 1400.4 436.0 1399.2 443.4 C1398.0 450.8 1395.0 461.1 1392.4 467.2 C1389.9 473.3 1386.8 475.7 1383.9 480.1 C1381.0 484.5 1378.7 489.2 1375.2 493.7 C1371.7 498.3 1367.6 503.0 1362.8 507.3 C1358.1 511.7 1352.4 516.4 1346.8 519.9 C1341.3 523.4 1335.2 525.7 1329.3 528.6 C1323.5 531.5 1315.6 535.3 1311.8 537.2 C1308.1 539.2 1308.8 539.0 1306.9 540.3 C1305.0 541.6 1301.6 544.3 1300.6 545.1"/><path d="M1168.0 489.3 C1167.4 492.4 1165.9 501.8 1164.6 508.0 C1163.3 514.2 1161.1 523.6 1160.3 526.7"/><path d="M1258.1 481.6 L1297.2 485.0"/><path d="M1288.7 509.7 L1297.2 535.2"/><path d="M1376.2 514.0 L1372.0 545.1"/></g><g clip-path="url(#pc9)"><path d="M1130.6 507.3 C1131.7 510.1 1134.0 518.6 1137.4 524.3 C1140.8 530.0 1145.3 535.1 1151.0 541.3 C1156.7 547.5 1164.0 555.5 1171.4 561.7 C1178.8 567.9 1185.9 573.0 1195.2 578.7 C1204.5 584.4 1216.5 590.9 1227.5 595.7 C1238.5 600.5 1251.6 605.3 1261.5 607.6 C1271.4 609.9 1278.5 609.6 1287.0 609.3 C1295.5 609.0 1302.6 608.7 1312.5 605.9 C1322.4 603.1 1336.6 597.4 1346.5 592.3 C1356.4 587.2 1364.5 582.4 1372.0 575.3 C1379.5 568.2 1386.6 558.3 1391.5 549.8 C1396.5 541.3 1399.8 531.4 1401.8 524.3 C1403.7 517.2 1403.2 510.1 1403.5 507.3"/><path d="M1156.1 534.5 C1159.5 532.5 1168.8 525.7 1176.5 522.6 C1184.2 519.5 1194.3 516.6 1202.0 515.8 C1209.7 514.9 1217.3 516.2 1222.4 517.5 C1227.5 518.8 1231.3 521.5 1232.6 523.5 C1233.9 525.4 1233.7 527.8 1230.0 529.4 C1226.4 531.0 1217.4 530.8 1210.5 532.8 C1203.6 534.8 1194.9 537.6 1188.4 541.3 C1181.9 545.0 1177.1 548.7 1171.4 554.9 C1165.7 561.1 1159.2 570.8 1154.4 578.7 C1149.6 586.6 1145.3 594.9 1142.5 602.5 C1139.7 610.1 1138.0 619.1 1137.4 624.6 C1136.8 630.1 1138.8 633.8 1139.1 635.7"/><path d="M1139.1 635.7 C1141.1 634.9 1144.8 635.2 1151.0 631.4 C1157.2 627.6 1168.0 619.5 1176.5 612.7 C1185.0 605.9 1193.5 596.8 1202.0 590.6 C1210.5 584.4 1219.6 579.4 1227.5 575.3 C1235.4 571.2 1242.5 567.7 1249.6 566.0 C1256.7 564.2 1263.8 564.1 1270.0 565.1 C1276.2 566.1 1281.3 568.5 1287.0 571.9 C1292.7 575.3 1298.3 581.0 1304.0 585.5 C1309.7 590.0 1313.9 595.1 1321.0 599.1 C1328.1 603.1 1336.6 607.0 1346.5 609.3 C1356.4 611.6 1369.2 613.0 1380.5 612.7 C1391.8 612.4 1406.3 609.9 1414.5 607.6 C1422.7 605.3 1427.8 601.4 1429.8 599.1 C1431.8 596.8 1430.4 596.0 1426.4 594.0 C1422.4 592.0 1415.1 590.3 1406.0 587.2 C1396.9 584.1 1382.8 579.5 1372.0 575.3 C1361.2 571.0 1350.5 566.0 1341.4 561.7 C1332.3 557.5 1322.7 552.9 1317.6 549.8 C1312.5 546.7 1311.1 545.3 1310.8 543.0 C1310.5 540.7 1311.4 538.2 1315.9 536.2 C1320.4 534.2 1330.1 532.5 1338.0 531.1 C1345.9 529.7 1355.0 528.6 1363.5 527.7 C1372.0 526.9 1384.8 526.3 1389.0 526.0"/><path d="M1389.0 526.0 C1388.7 527.1 1389.6 529.7 1387.3 532.8 C1385.0 535.9 1381.4 540.6 1375.4 544.7 C1369.5 548.8 1360.7 554.5 1351.6 557.5 C1342.5 560.4 1330.3 562.4 1321.0 562.5 C1311.7 562.7 1300.9 559.0 1295.5 558.3 C1290.1 557.6 1288.7 555.5 1288.7 558.3 C1288.7 561.1 1291.5 566.8 1295.5 575.3 C1299.5 583.8 1307.0 598.4 1312.5 609.3 C1318.0 620.2 1326.0 635.5 1328.7 640.8"/><path d="M1156.1 537.0 C1160.9 537.0 1174.5 536.4 1185.0 536.5 C1195.5 536.7 1209.1 537.1 1219.0 537.9 C1228.9 538.7 1238.0 539.0 1244.5 541.3 C1251.0 543.6 1255.0 547.2 1258.1 551.5 C1261.2 555.8 1261.5 560.8 1263.2 566.8 C1264.9 572.8 1266.0 580.7 1268.3 587.2 C1270.6 593.7 1272.3 599.7 1276.8 605.9 C1281.3 612.1 1289.0 619.2 1295.5 624.6 C1302.0 630.0 1310.4 635.4 1315.9 638.2 C1321.4 641.0 1326.5 641.0 1328.7 641.6"/><path d="M1100.0 510.7 C1102.8 510.9 1111.3 510.6 1117.0 512.1 C1122.7 513.5 1128.3 515.5 1134.0 519.2 C1139.7 522.9 1144.8 529.3 1151.0 534.5 C1157.2 539.7 1164.0 546.8 1171.4 550.7 C1178.8 554.5 1185.9 556.0 1195.2 557.5 C1204.5 558.9 1216.5 559.6 1227.5 559.2 C1238.5 558.7 1253.0 556.9 1261.5 554.9 C1270.0 552.9 1275.5 549.2 1278.5 547.2 C1281.5 545.3 1281.3 544.6 1279.3 543.0 C1277.4 541.4 1273.8 540.2 1266.6 537.9 C1259.4 535.6 1246.2 532.5 1236.0 529.4 C1225.8 526.3 1214.5 522.3 1205.4 519.2 C1196.3 516.1 1187.3 512.7 1181.6 510.7 C1175.9 508.7 1173.1 507.9 1171.4 507.3"/><path d="M1161.2 507.3 L1159.5 526.0"/><path d="M1236.0 581.2 L1272.5 588.9"/><path d="M1263.2 560.0 L1288.7 553.2"/><path d="M1238.5 527.7 L1244.5 552.3"/><path d="M1288.7 510.7 L1297.2 535.3"/><path d="M1376.2 514.1 L1371.2 551.5"/><path d="M1276.8 507.3 C1278.5 509.6 1282.5 517.2 1287.0 520.9 C1291.5 524.6 1297.8 527.7 1304.0 529.4 C1310.2 531.1 1317.3 531.9 1324.4 531.1 C1331.5 530.2 1340.0 527.4 1346.5 524.3 C1353.0 521.2 1359.2 515.2 1363.5 512.4 C1367.8 509.6 1370.6 508.2 1372.0 507.3"/></g><path d="M1256.0 517.0 L1281.0 517.0"/><path d="M1256.0 544.0 L1281.0 544.0"/><path d="M1253.0 522.0 L1253.0 539.0"/><path d="M1284.0 522.0 L1284.0 539.0"/><path d="M1312.5 489.5 C1311.2 490.8 1308.8 493.3 1304.5 497.5 C1300.2 501.7 1295.9 506.3 1286.9 514.5 C1277.9 522.7 1261.1 537.6 1250.5 546.9 C1239.9 556.2 1231.4 563.2 1223.5 570.5 C1215.6 577.8 1206.3 587.2 1202.9 590.5"/><g clip-path="url(#pc12)"><path d="M508.5 631.8 C510.8 632.0 516.2 630.9 522.1 632.7 C528.0 634.5 537.7 638.6 544.2 642.9 C550.7 647.1 556.4 653.1 561.2 658.2 C566.0 663.3 570.0 668.1 573.1 673.5 C576.2 678.9 577.6 684.8 579.9 690.5 C582.2 696.2 583.6 702.7 586.7 707.5 C589.8 712.3 593.8 716.6 598.6 719.4 C603.4 722.2 608.5 723.6 615.6 724.5 C622.7 725.4 632.6 725.1 641.1 724.5 C649.6 723.9 658.4 722.1 666.6 721.1 C674.8 720.1 686.1 718.3 690.4 718.5 C694.6 718.8 693.5 720.7 692.1 722.8 C690.7 724.9 684.7 728.8 681.9 731.3 C679.1 733.8 676.2 736.7 675.1 737.8"/><path d="M508.5 631.8 C510.8 635.4 517.3 645.6 522.1 653.1 C526.9 660.6 532.9 670.1 537.4 676.9 C541.9 683.7 546.2 689.2 549.3 693.9 C552.4 698.6 555.5 702.5 556.1 705.0 C556.7 707.4 555.0 708.5 552.7 708.3 C550.4 708.2 547.6 705.7 542.5 704.1 C537.4 702.5 528.9 699.7 522.1 699.0 C515.3 698.3 508.8 698.1 501.7 699.8 C494.6 701.5 486.4 705.4 479.6 709.2 C472.8 713.0 465.1 718.8 460.9 722.8 C456.6 726.8 455.2 731.3 454.1 733.0"/><path d="M454.1 729.6 C458.4 729.3 471.1 728.8 479.6 727.9 C488.1 727.1 496.3 725.6 505.1 724.5 C513.9 723.4 527.1 722.5 532.3 721.1 C537.5 719.7 536.8 718.0 536.6 716.0 C536.3 714.0 535.8 711.9 530.6 709.2 C525.4 706.5 515.0 703.1 505.1 699.8 C495.2 696.6 482.4 692.5 471.1 689.6 C459.8 686.8 446.2 685.0 437.1 682.8 C428.0 680.7 420.2 678.3 416.7 676.9 C413.2 675.5 413.9 676.0 415.9 674.3 C417.8 672.6 419.4 669.2 428.6 666.7 C437.8 664.2 455.5 660.5 471.1 659.0 C486.7 657.6 505.1 657.7 522.1 657.9 C539.1 658.0 556.1 658.7 573.1 659.9 C590.1 661.1 609.9 663.0 624.1 665.0 C638.3 667.0 648.2 669.2 658.1 671.8 C668.0 674.3 676.8 676.9 683.6 680.3 C690.4 683.7 695.2 687.4 698.9 692.2 C702.6 697.0 704.8 703.2 705.7 709.2 C706.5 715.2 704.9 723.1 704.0 727.9 C703.2 732.7 701.2 736.1 700.6 737.8"/><path d="M452.4 737.8 C450.4 734.7 443.8 725.6 440.5 719.4 C437.2 713.2 434.0 706.7 432.9 700.7 C431.7 694.8 432.1 688.8 433.7 683.7 C435.3 678.6 436.5 673.7 442.2 670.1 C447.9 666.5 457.8 663.5 467.7 661.9 C477.6 660.4 491.2 659.7 501.7 660.8 C512.2 661.8 522.1 664.9 530.6 668.4 C539.1 671.9 545.6 678.3 552.7 682.0 C559.8 685.7 566.3 689.1 573.1 690.5 C579.9 691.9 586.0 691.9 593.5 690.5 C601.0 689.1 613.5 682.9 617.8 682.3 C622.1 681.8 619.2 684.0 619.3 687.1 C619.5 690.2 619.6 695.3 618.7 700.7 C617.8 706.1 615.8 713.2 613.9 719.4 C612.0 725.6 608.2 734.7 607.1 737.8"/><path d="M699.8 611.5 C697.1 613.3 690.5 617.0 683.6 622.5 C676.7 628.0 666.6 637.2 658.1 644.6 C649.6 652.0 639.7 660.5 632.6 666.7 C625.5 672.9 618.4 679.5 615.6 682.0"/><path d="M699.8 611.5 C700.2 612.2 702.2 611.6 702.6 615.7 C703.1 619.8 703.5 628.7 702.3 636.1 C701.1 643.5 698.1 653.8 695.5 659.9 C693.0 666.0 689.9 668.4 687.0 672.8 C684.1 677.2 681.8 681.9 678.3 686.4 C674.8 691.0 670.7 695.7 665.9 700.0 C661.2 704.4 655.5 709.1 649.9 712.6 C644.4 716.1 638.3 718.4 632.4 721.3 C626.6 724.2 618.7 728.0 614.9 729.9 C611.2 731.9 611.9 731.7 610.0 733.0 C608.1 734.3 604.7 737.0 603.7 737.8"/><path d="M471.1 682.0 C470.5 685.1 469.0 694.5 467.7 700.7 C466.4 706.9 464.2 716.3 463.4 719.4"/><path d="M561.2 674.3 L600.3 677.8"/><path d="M591.8 702.4 L600.3 727.9"/><path d="M679.4 706.7 L675.1 737.8"/></g><g clip-path="url(#pc13)"><path d="M433.7 700.0 C434.8 702.8 437.1 711.3 440.5 717.0 C443.9 722.7 448.4 727.8 454.1 734.0 C459.8 740.2 467.1 748.2 474.5 754.4 C481.9 760.6 489.0 765.7 498.3 771.4 C507.7 777.1 519.6 783.6 530.6 788.4 C541.6 793.2 554.7 798.0 564.6 800.3 C574.5 802.6 581.6 802.3 590.1 802.0 C598.6 801.7 605.7 801.4 615.6 798.6 C625.5 795.8 639.7 790.1 649.6 785.0 C659.5 779.9 667.6 775.1 675.1 768.0 C682.6 760.9 689.7 751.0 694.6 742.5 C699.6 734.0 702.9 724.1 704.9 717.0 C706.8 709.9 706.3 702.8 706.6 700.0"/><path d="M459.2 727.2 C462.6 725.2 471.9 718.4 479.6 715.3 C487.3 712.2 497.4 709.4 505.1 708.5 C512.8 707.6 520.4 708.9 525.5 710.2 C530.6 711.5 534.4 714.2 535.7 716.1 C537.0 718.1 536.8 720.5 533.1 722.1 C529.5 723.7 520.5 723.5 513.6 725.5 C506.7 727.5 498.0 730.3 491.5 734.0 C485.0 737.7 480.2 741.4 474.5 747.6 C468.8 753.8 462.3 763.5 457.5 771.4 C452.7 779.3 448.4 787.6 445.6 795.2 C442.8 802.9 441.1 811.8 440.5 817.3 C439.9 822.8 441.9 826.5 442.2 828.4"/><path d="M442.2 828.4 C444.2 827.6 447.9 827.9 454.1 824.1 C460.3 820.3 471.1 812.2 479.6 805.4 C488.1 798.6 496.6 789.5 505.1 783.3 C513.6 777.1 522.7 772.1 530.6 768.0 C538.5 763.9 545.6 760.4 552.7 758.6 C559.8 756.9 566.9 756.8 573.1 757.8 C579.3 758.8 584.4 761.2 590.1 764.6 C595.8 768.0 601.4 773.7 607.1 778.2 C612.8 782.7 617.0 787.8 624.1 791.8 C631.2 795.8 639.7 799.7 649.6 802.0 C659.5 804.3 672.3 805.7 683.6 805.4 C694.9 805.1 709.4 802.6 717.6 800.3 C725.8 798.0 730.9 794.1 732.9 791.8 C734.9 789.5 733.5 788.7 729.5 786.7 C725.5 784.7 718.2 783.0 709.1 779.9 C700.0 776.8 685.9 772.2 675.1 768.0 C664.3 763.8 653.6 758.6 644.5 754.4 C635.4 750.1 625.8 745.6 620.7 742.5 C615.6 739.4 614.2 738.0 613.9 735.7 C613.6 733.4 614.5 730.9 619.0 728.9 C623.5 726.9 633.2 725.2 641.1 723.8 C649.0 722.4 658.1 721.2 666.6 720.4 C675.1 719.5 687.9 719.0 692.1 718.7"/><path d="M692.1 718.7 C691.8 719.8 692.7 722.4 690.4 725.5 C688.1 728.6 684.5 733.3 678.5 737.4 C672.6 741.5 663.8 747.2 654.7 750.1 C645.6 753.1 633.5 755.1 624.1 755.2 C614.8 755.4 604.0 751.7 598.6 751.0 C593.2 750.3 591.8 748.2 591.8 751.0 C591.8 753.8 594.6 759.5 598.6 768.0 C602.6 776.5 610.1 791.1 615.6 802.0 C621.1 812.9 629.1 828.2 631.8 833.5"/><path d="M459.2 729.8 C464.0 729.7 477.6 729.1 488.1 729.2 C498.6 729.4 512.2 729.8 522.1 730.6 C532.0 731.4 541.1 731.7 547.6 734.0 C554.1 736.3 558.1 740.0 561.2 744.2 C564.3 748.5 564.6 753.5 566.3 759.5 C568.0 765.5 569.1 773.4 571.4 779.9 C573.7 786.4 575.4 792.4 579.9 798.6 C584.4 804.8 592.1 811.9 598.6 817.3 C605.1 822.7 613.5 828.1 619.0 830.9 C624.5 833.7 629.6 833.7 631.8 834.3"/><path d="M403.1 703.4 C405.9 703.6 414.4 703.3 420.1 704.8 C425.8 706.2 431.4 708.2 437.1 711.9 C442.8 715.6 447.9 722.0 454.1 727.2 C460.3 732.4 467.1 739.5 474.5 743.4 C481.9 747.2 489.0 748.7 498.3 750.1 C507.7 751.6 519.6 752.3 530.6 751.9 C541.6 751.4 556.1 749.6 564.6 747.6 C573.1 745.6 578.6 741.9 581.6 740.0 C584.6 738.0 584.4 737.3 582.4 735.7 C580.5 734.1 576.9 732.9 569.7 730.6 C562.5 728.3 549.3 725.2 539.1 722.1 C528.9 719.0 517.6 715.0 508.5 711.9 C499.4 708.8 490.4 705.4 484.7 703.4 C479.0 701.4 476.2 700.6 474.5 700.0"/><path d="M464.3 700.0 L462.6 718.7"/><path d="M539.1 774.0 L575.6 781.6"/><path d="M566.3 752.7 L591.8 745.9"/><path d="M541.6 720.4 L547.6 745.0"/><path d="M591.8 703.4 L600.3 728.0"/><path d="M679.4 706.8 L674.3 744.2"/><path d="M579.9 700.0 C581.6 702.3 585.6 709.9 590.1 713.6 C594.6 717.3 600.9 720.4 607.1 722.1 C613.3 723.8 620.4 724.6 627.5 723.8 C634.6 722.9 643.1 720.1 649.6 717.0 C656.1 713.9 662.4 707.9 666.6 705.1 C670.9 702.3 673.7 700.9 675.1 700.0"/></g><path d="M559.1 709.7 L584.1 709.7"/><path d="M559.1 736.7 L584.1 736.7"/><path d="M556.1 714.7 L556.1 731.7"/><path d="M587.1 714.7 L587.1 731.7"/><path d="M615.6 682.2 C613.6 683.5 607.6 688.3 603.6 690.2 C599.6 692.1 595.2 693.0 591.6 693.7 C588.0 694.4 583.8 694.3 582.2 694.4"/><g clip-path="url(#pc16)"><path d="M857.0 631.8 C859.2 632.0 864.6 630.9 870.5 632.7 C876.5 634.5 886.1 638.6 892.6 642.9 C899.2 647.1 904.8 653.1 909.6 658.2 C914.5 663.3 918.4 668.1 921.5 673.5 C924.7 678.9 926.1 684.8 928.3 690.5 C930.6 696.2 932.0 702.7 935.1 707.5 C938.3 712.3 942.2 716.6 947.0 719.4 C951.9 722.2 957.0 723.6 964.0 724.5 C971.1 725.4 981.0 725.1 989.5 724.5 C998.0 723.9 1006.8 722.1 1015.0 721.1 C1023.3 720.1 1034.6 718.3 1038.8 718.5 C1043.1 718.8 1042.0 720.7 1040.5 722.8 C1039.1 724.9 1033.2 728.8 1030.3 731.3 C1027.5 733.8 1024.7 736.7 1023.5 737.8"/><path d="M857.0 631.8 C859.2 635.4 865.7 645.6 870.5 653.1 C875.4 660.6 881.3 670.1 885.8 676.9 C890.4 683.7 894.6 689.2 897.8 693.9 C900.9 698.6 904.0 702.5 904.5 705.0 C905.1 707.4 903.4 708.5 901.1 708.3 C898.9 708.2 896.1 705.7 891.0 704.1 C885.9 702.5 877.4 699.7 870.5 699.0 C863.7 698.3 857.2 698.1 850.1 699.8 C843.1 701.5 834.8 705.4 828.0 709.2 C821.2 713.0 813.6 718.8 809.3 722.8 C805.1 726.8 803.7 731.3 802.5 733.0"/><path d="M802.5 729.6 C806.8 729.3 819.5 728.8 828.0 727.9 C836.5 727.1 844.8 725.6 853.5 724.5 C862.3 723.4 875.5 722.5 880.8 721.1 C886.0 719.7 885.3 718.0 885.0 716.0 C884.7 714.0 884.3 711.9 879.0 709.2 C873.8 706.5 863.5 703.1 853.5 699.8 C843.6 696.6 830.9 692.5 819.5 689.6 C808.2 686.8 794.6 685.0 785.5 682.8 C776.5 680.7 768.7 678.3 765.1 676.9 C761.6 675.5 762.3 676.0 764.3 674.3 C766.3 672.6 767.8 669.2 777.0 666.7 C786.3 664.2 804.0 660.5 819.5 659.0 C835.1 657.6 853.5 657.7 870.5 657.9 C887.5 658.0 904.5 658.7 921.5 659.9 C938.5 661.1 958.4 663.0 972.5 665.0 C986.7 667.0 996.6 669.2 1006.5 671.8 C1016.5 674.3 1025.2 676.9 1032.0 680.3 C1038.8 683.7 1043.7 687.4 1047.3 692.2 C1051.0 697.0 1053.3 703.2 1054.1 709.2 C1055.0 715.2 1053.3 723.1 1052.5 727.9 C1051.6 732.7 1049.6 736.1 1049.0 737.8"/><path d="M800.8 737.8 C798.9 734.7 792.2 725.6 789.0 719.4 C785.7 713.2 782.4 706.7 781.3 700.7 C780.2 694.8 780.6 688.8 782.1 683.7 C783.7 678.6 785.0 673.7 790.6 670.1 C796.3 666.5 806.2 663.5 816.1 661.9 C826.1 660.4 839.7 659.7 850.1 660.8 C860.6 661.8 870.5 664.9 879.0 668.4 C887.5 671.9 894.1 678.3 901.1 682.0 C908.2 685.7 914.7 689.1 921.5 690.5 C928.4 691.9 934.5 691.9 942.0 690.5 C949.4 689.1 962.0 682.9 966.3 682.3 C970.6 681.8 967.6 684.0 967.8 687.1 C967.9 690.2 968.0 695.3 967.1 700.7 C966.2 706.1 964.3 713.2 962.3 719.4 C960.4 725.6 956.7 734.7 955.5 737.8"/><path d="M1048.2 611.5 C1045.5 613.3 1039.0 617.0 1032.0 622.5 C1025.1 628.0 1015.0 637.2 1006.5 644.6 C998.0 652.0 988.1 660.5 981.0 666.7 C974.0 672.9 966.9 679.5 964.0 682.0"/><path d="M1048.2 611.5 C1048.7 612.2 1050.7 611.6 1051.1 615.7 C1051.5 619.8 1051.9 628.7 1050.8 636.1 C1049.6 643.5 1046.5 653.8 1044.0 659.9 C1041.4 666.0 1038.3 668.4 1035.5 672.8 C1032.6 677.2 1030.3 681.9 1026.8 686.4 C1023.3 691.0 1019.1 695.7 1014.4 700.0 C1009.6 704.4 1004.0 709.1 998.4 712.6 C992.8 716.1 986.7 718.4 980.9 721.3 C975.0 724.2 967.1 728.0 963.4 729.9 C959.6 731.9 960.3 731.7 958.4 733.0 C956.6 734.3 953.2 737.0 952.1 737.8"/><path d="M819.5 682.0 C819.0 685.1 817.4 694.5 816.1 700.7 C814.9 706.9 812.6 716.3 811.9 719.4"/><path d="M909.6 674.3 L948.8 677.8"/><path d="M940.2 702.4 L948.8 727.9"/><path d="M1027.8 706.7 L1023.5 737.8"/></g><g clip-path="url(#pc17)"><path d="M782.1 700.0 C783.3 702.8 785.6 711.3 789.0 717.0 C792.4 722.7 796.9 727.8 802.5 734.0 C808.2 740.2 815.6 748.2 823.0 754.4 C830.3 760.6 837.4 765.7 846.8 771.4 C856.1 777.1 868.0 783.6 879.0 788.4 C890.1 793.2 903.1 798.0 913.0 800.3 C923.0 802.6 930.0 802.3 938.5 802.0 C947.0 801.7 954.1 801.4 964.0 798.6 C974.0 795.8 988.1 790.1 998.0 785.0 C1008.0 779.9 1016.0 775.1 1023.5 768.0 C1031.1 760.9 1038.1 751.0 1043.1 742.5 C1048.1 734.0 1051.3 724.1 1053.3 717.0 C1055.3 709.9 1054.7 702.8 1055.0 700.0"/><path d="M807.6 727.2 C811.0 725.2 820.4 718.4 828.0 715.3 C835.7 712.2 845.9 709.4 853.5 708.5 C861.2 707.6 868.9 708.9 874.0 710.2 C879.1 711.5 882.9 714.2 884.1 716.1 C885.4 718.1 885.3 720.5 881.6 722.1 C877.9 723.7 869.0 723.5 862.0 725.5 C855.1 727.5 846.5 730.3 840.0 734.0 C833.4 737.7 828.6 741.4 823.0 747.6 C817.3 753.8 810.8 763.5 806.0 771.4 C801.1 779.3 796.9 787.6 794.0 795.2 C791.2 802.9 789.5 811.8 789.0 817.3 C788.4 822.8 790.4 826.5 790.6 828.4"/><path d="M790.6 828.4 C792.6 827.6 796.3 827.9 802.5 824.1 C808.8 820.3 819.5 812.2 828.0 805.4 C836.5 798.6 845.0 789.5 853.5 783.3 C862.0 777.1 871.1 772.1 879.0 768.0 C887.0 763.9 894.1 760.4 901.1 758.6 C908.2 756.9 915.3 756.8 921.5 757.8 C927.8 758.8 932.9 761.2 938.5 764.6 C944.2 768.0 949.9 773.7 955.5 778.2 C961.2 782.7 965.5 787.8 972.5 791.8 C979.6 795.8 988.1 799.7 998.0 802.0 C1008.0 804.3 1020.7 805.7 1032.0 805.4 C1043.4 805.1 1057.8 802.6 1066.0 800.3 C1074.3 798.0 1079.4 794.1 1081.3 791.8 C1083.3 789.5 1081.9 788.7 1078.0 786.7 C1074.0 784.7 1066.6 783.0 1057.5 779.9 C1048.5 776.8 1034.3 772.2 1023.5 768.0 C1012.8 763.8 1002.0 758.6 993.0 754.4 C983.9 750.1 974.2 745.6 969.1 742.5 C964.0 739.4 962.6 738.0 962.3 735.7 C962.1 733.4 962.9 730.9 967.5 728.9 C972.0 726.9 981.6 725.2 989.5 723.8 C997.5 722.4 1006.5 721.2 1015.0 720.4 C1023.5 719.5 1036.3 719.0 1040.5 718.7"/><path d="M1040.5 718.7 C1040.3 719.8 1041.1 722.4 1038.8 725.5 C1036.6 728.6 1032.9 733.3 1027.0 737.4 C1021.0 741.5 1012.2 747.2 1003.1 750.1 C994.1 753.1 981.9 755.1 972.5 755.2 C963.2 755.4 952.4 751.7 947.0 751.0 C941.7 750.3 940.2 748.2 940.2 751.0 C940.2 753.8 943.1 759.5 947.0 768.0 C951.0 776.5 958.5 791.1 964.0 802.0 C969.6 812.9 977.5 828.2 980.2 833.5"/><path d="M807.6 729.8 C812.5 729.7 826.1 729.1 836.5 729.2 C847.0 729.4 860.6 729.8 870.5 730.6 C880.5 731.4 889.5 731.7 896.0 734.0 C902.6 736.3 906.5 740.0 909.6 744.2 C912.8 748.5 913.0 753.5 914.8 759.5 C916.5 765.5 917.6 773.4 919.8 779.9 C922.1 786.4 923.8 792.4 928.3 798.6 C932.9 804.8 940.5 811.9 947.0 817.3 C953.6 822.7 961.9 828.1 967.5 830.9 C973.0 833.7 978.1 833.7 980.2 834.3"/><path d="M751.5 703.4 C754.4 703.6 762.9 703.3 768.5 704.8 C774.2 706.2 779.9 708.2 785.5 711.9 C791.2 715.6 796.3 722.0 802.5 727.2 C808.8 732.4 815.6 739.5 823.0 743.4 C830.3 747.2 837.4 748.7 846.8 750.1 C856.1 751.6 868.0 752.3 879.0 751.9 C890.1 751.4 904.5 749.6 913.0 747.6 C921.5 745.6 927.1 741.9 930.0 740.0 C933.0 738.0 932.9 737.3 930.9 735.7 C928.9 734.1 925.4 732.9 918.1 730.6 C910.9 728.3 897.7 725.2 887.5 722.1 C877.4 719.0 866.0 715.0 857.0 711.9 C847.9 708.8 838.8 705.4 833.1 703.4 C827.5 701.4 824.6 700.6 823.0 700.0"/><path d="M812.8 700.0 L811.0 718.7"/><path d="M887.5 774.0 L924.1 781.6"/><path d="M914.8 752.7 L940.2 745.9"/><path d="M890.1 720.4 L896.0 745.0"/><path d="M940.2 703.4 L948.8 728.0"/><path d="M1027.8 706.8 L1022.7 744.2"/><path d="M928.3 700.0 C930.0 702.3 934.0 709.9 938.5 713.6 C943.1 717.3 949.3 720.4 955.5 722.1 C961.8 723.8 968.9 724.6 976.0 723.8 C983.0 722.9 991.5 720.1 998.0 717.0 C1004.6 713.9 1010.8 707.9 1015.0 705.1 C1019.3 702.3 1022.1 700.9 1023.5 700.0"/></g><path d="M907.5 709.7 L932.5 709.7"/><path d="M907.5 736.7 L932.5 736.7"/><path d="M904.5 714.7 L904.5 731.7"/><path d="M935.5 714.7 L935.5 731.7"/><path d="M964.0 682.2 C962.0 683.5 956.0 688.3 952.0 690.2 C948.0 692.1 943.6 693.0 940.0 693.7 C936.5 694.4 932.2 694.3 930.6 694.4"/><g clip-path="url(#pc20)"><path d="M1205.4 631.8 C1207.7 632.0 1213.0 630.9 1219.0 632.7 C1225.0 634.5 1234.6 638.6 1241.1 642.9 C1247.6 647.1 1253.3 653.1 1258.1 658.2 C1262.9 663.3 1266.9 668.1 1270.0 673.5 C1273.1 678.9 1274.5 684.8 1276.8 690.5 C1279.1 696.2 1280.5 702.7 1283.6 707.5 C1286.7 712.3 1290.7 716.6 1295.5 719.4 C1300.3 722.2 1305.4 723.6 1312.5 724.5 C1319.6 725.4 1329.5 725.1 1338.0 724.5 C1346.5 723.9 1355.3 722.1 1363.5 721.1 C1371.7 720.1 1383.0 718.3 1387.3 718.5 C1391.5 718.8 1390.4 720.7 1389.0 722.8 C1387.6 724.9 1381.6 728.8 1378.8 731.3 C1376.0 733.8 1373.1 736.7 1372.0 737.8"/><path d="M1205.4 631.8 C1207.7 635.4 1214.2 645.6 1219.0 653.1 C1223.8 660.6 1229.8 670.1 1234.3 676.9 C1238.8 683.7 1243.1 689.2 1246.2 693.9 C1249.3 698.6 1252.4 702.5 1253.0 705.0 C1253.6 707.4 1251.9 708.5 1249.6 708.3 C1247.3 708.2 1244.5 705.7 1239.4 704.1 C1234.3 702.5 1225.8 699.7 1219.0 699.0 C1212.2 698.3 1205.7 698.1 1198.6 699.8 C1191.5 701.5 1183.3 705.4 1176.5 709.2 C1169.7 713.0 1162.0 718.8 1157.8 722.8 C1153.5 726.8 1152.1 731.3 1151.0 733.0"/><path d="M1151.0 729.6 C1155.2 729.3 1168.0 728.8 1176.5 727.9 C1185.0 727.1 1193.2 725.6 1202.0 724.5 C1210.8 723.4 1224.0 722.5 1229.2 721.1 C1234.4 719.7 1233.7 718.0 1233.5 716.0 C1233.2 714.0 1232.7 711.9 1227.5 709.2 C1222.3 706.5 1211.9 703.1 1202.0 699.8 C1192.1 696.6 1179.3 692.5 1168.0 689.6 C1156.7 686.8 1143.1 685.0 1134.0 682.8 C1124.9 680.7 1117.1 678.3 1113.6 676.9 C1110.1 675.5 1110.8 676.0 1112.8 674.3 C1114.7 672.6 1116.3 669.2 1125.5 666.7 C1134.7 664.2 1152.4 660.5 1168.0 659.0 C1183.6 657.6 1202.0 657.7 1219.0 657.9 C1236.0 658.0 1253.0 658.7 1270.0 659.9 C1287.0 661.1 1306.8 663.0 1321.0 665.0 C1335.2 667.0 1345.1 669.2 1355.0 671.8 C1364.9 674.3 1373.7 676.9 1380.5 680.3 C1387.3 683.7 1392.1 687.4 1395.8 692.2 C1399.5 697.0 1401.8 703.2 1402.6 709.2 C1403.4 715.2 1401.8 723.1 1400.9 727.9 C1400.1 732.7 1398.1 736.1 1397.5 737.8"/><path d="M1149.3 737.8 C1147.3 734.7 1140.7 725.6 1137.4 719.4 C1134.1 713.2 1130.9 706.7 1129.8 700.7 C1128.6 694.8 1129.0 688.8 1130.6 683.7 C1132.2 678.6 1133.4 673.7 1139.1 670.1 C1144.8 666.5 1154.7 663.5 1164.6 661.9 C1174.5 660.4 1188.1 659.7 1198.6 660.8 C1209.1 661.8 1219.0 664.9 1227.5 668.4 C1236.0 671.9 1242.5 678.3 1249.6 682.0 C1256.7 685.7 1263.2 689.1 1270.0 690.5 C1276.8 691.9 1282.9 691.9 1290.4 690.5 C1297.9 689.1 1310.4 682.9 1314.7 682.3 C1319.0 681.8 1316.1 684.0 1316.2 687.1 C1316.4 690.2 1316.5 695.3 1315.6 700.7 C1314.7 706.1 1312.7 713.2 1310.8 719.4 C1308.9 725.6 1305.1 734.7 1304.0 737.8"/><path d="M1396.7 611.5 C1394.0 613.3 1387.4 617.0 1380.5 622.5 C1373.6 628.0 1363.5 637.2 1355.0 644.6 C1346.5 652.0 1336.6 660.5 1329.5 666.7 C1322.4 672.9 1315.3 679.5 1312.5 682.0"/><path d="M1396.7 611.5 C1397.1 612.2 1399.1 611.6 1399.5 615.7 C1400.0 619.8 1400.4 628.7 1399.2 636.1 C1398.0 643.5 1395.0 653.8 1392.4 659.9 C1389.9 666.0 1386.8 668.4 1383.9 672.8 C1381.0 677.2 1378.7 681.9 1375.2 686.4 C1371.7 691.0 1367.6 695.7 1362.8 700.0 C1358.1 704.4 1352.4 709.1 1346.8 712.6 C1341.3 716.1 1335.2 718.4 1329.3 721.3 C1323.5 724.2 1315.6 728.0 1311.8 729.9 C1308.1 731.9 1308.8 731.7 1306.9 733.0 C1305.0 734.3 1301.6 737.0 1300.6 737.8"/><path d="M1168.0 682.0 C1167.4 685.1 1165.9 694.5 1164.6 700.7 C1163.3 706.9 1161.1 716.3 1160.3 719.4"/><path d="M1258.1 674.3 L1297.2 677.8"/><path d="M1288.7 702.4 L1297.2 727.9"/><path d="M1376.2 706.7 L1372.0 737.8"/></g><g clip-path="url(#pc21)"><path d="M1130.6 700.0 C1131.7 702.8 1134.0 711.3 1137.4 717.0 C1140.8 722.7 1145.3 727.8 1151.0 734.0 C1156.7 740.2 1164.0 748.2 1171.4 754.4 C1178.8 760.6 1185.9 765.7 1195.2 771.4 C1204.5 777.1 1216.5 783.6 1227.5 788.4 C1238.5 793.2 1251.6 798.0 1261.5 800.3 C1271.4 802.6 1278.5 802.3 1287.0 802.0 C1295.5 801.7 1302.6 801.4 1312.5 798.6 C1322.4 795.8 1336.6 790.1 1346.5 785.0 C1356.4 779.9 1364.5 775.1 1372.0 768.0 C1379.5 760.9 1386.6 751.0 1391.5 742.5 C1396.5 734.0 1399.8 724.1 1401.8 717.0 C1403.7 709.9 1403.2 702.8 1403.5 700.0"/><path d="M1156.1 727.2 C1159.5 725.2 1168.8 718.4 1176.5 715.3 C1184.2 712.2 1194.3 709.4 1202.0 708.5 C1209.7 707.6 1217.3 708.9 1222.4 710.2 C1227.5 711.5 1231.3 714.2 1232.6 716.1 C1233.9 718.1 1233.7 720.5 1230.0 722.1 C1226.4 723.7 1217.4 723.5 1210.5 725.5 C1203.6 727.5 1194.9 730.3 1188.4 734.0 C1181.9 737.7 1177.1 741.4 1171.4 747.6 C1165.7 753.8 1159.2 763.5 1154.4 771.4 C1149.6 779.3 1145.3 787.6 1142.5 795.2 C1139.7 802.9 1138.0 811.8 1137.4 817.3 C1136.8 822.8 1138.8 826.5 1139.1 828.4"/><path d="M1139.1 828.4 C1141.1 827.6 1144.8 827.9 1151.0 824.1 C1157.2 820.3 1168.0 812.2 1176.5 805.4 C1185.0 798.6 1193.5 789.5 1202.0 783.3 C1210.5 777.1 1219.6 772.1 1227.5 768.0 C1235.4 763.9 1242.5 760.4 1249.6 758.6 C1256.7 756.9 1263.8 756.8 1270.0 757.8 C1276.2 758.8 1281.3 761.2 1287.0 764.6 C1292.7 768.0 1298.3 773.7 1304.0 778.2 C1309.7 782.7 1313.9 787.8 1321.0 791.8 C1328.1 795.8 1336.6 799.7 1346.5 802.0 C1356.4 804.3 1369.2 805.7 1380.5 805.4 C1391.8 805.1 1406.3 802.6 1414.5 800.3 C1422.7 798.0 1427.8 794.1 1429.8 791.8 C1431.8 789.5 1430.4 788.7 1426.4 786.7 C1422.4 784.7 1415.1 783.0 1406.0 779.9 C1396.9 776.8 1382.8 772.2 1372.0 768.0 C1361.2 763.8 1350.5 758.6 1341.4 754.4 C1332.3 750.1 1322.7 745.6 1317.6 742.5 C1312.5 739.4 1311.1 738.0 1310.8 735.7 C1310.5 733.4 1311.4 730.9 1315.9 728.9 C1320.4 726.9 1330.1 725.2 1338.0 723.8 C1345.9 722.4 1355.0 721.2 1363.5 720.4 C1372.0 719.5 1384.8 719.0 1389.0 718.7"/><path d="M1389.0 718.7 C1388.7 719.8 1389.6 722.4 1387.3 725.5 C1385.0 728.6 1381.4 733.3 1375.4 737.4 C1369.5 741.5 1360.7 747.2 1351.6 750.1 C1342.5 753.1 1330.3 755.1 1321.0 755.2 C1311.7 755.4 1300.9 751.7 1295.5 751.0 C1290.1 750.3 1288.7 748.2 1288.7 751.0 C1288.7 753.8 1291.5 759.5 1295.5 768.0 C1299.5 776.5 1307.0 791.1 1312.5 802.0 C1318.0 812.9 1326.0 828.2 1328.7 833.5"/><path d="M1156.1 729.8 C1160.9 729.7 1174.5 729.1 1185.0 729.2 C1195.5 729.4 1209.1 729.8 1219.0 730.6 C1228.9 731.4 1238.0 731.7 1244.5 734.0 C1251.0 736.3 1255.0 740.0 1258.1 744.2 C1261.2 748.5 1261.5 753.5 1263.2 759.5 C1264.9 765.5 1266.0 773.4 1268.3 779.9 C1270.6 786.4 1272.3 792.4 1276.8 798.6 C1281.3 804.8 1289.0 811.9 1295.5 817.3 C1302.0 822.7 1310.4 828.1 1315.9 830.9 C1321.4 833.7 1326.5 833.7 1328.7 834.3"/><path d="M1100.0 703.4 C1102.8 703.6 1111.3 703.3 1117.0 704.8 C1122.7 706.2 1128.3 708.2 1134.0 711.9 C1139.7 715.6 1144.8 722.0 1151.0 727.2 C1157.2 732.4 1164.0 739.5 1171.4 743.4 C1178.8 747.2 1185.9 748.7 1195.2 750.1 C1204.5 751.6 1216.5 752.3 1227.5 751.9 C1238.5 751.4 1253.0 749.6 1261.5 747.6 C1270.0 745.6 1275.5 741.9 1278.5 740.0 C1281.5 738.0 1281.3 737.3 1279.3 735.7 C1277.4 734.1 1273.8 732.9 1266.6 730.6 C1259.4 728.3 1246.2 725.2 1236.0 722.1 C1225.8 719.0 1214.5 715.0 1205.4 711.9 C1196.3 708.8 1187.3 705.4 1181.6 703.4 C1175.9 701.4 1173.1 700.6 1171.4 700.0"/><path d="M1161.2 700.0 L1159.5 718.7"/><path d="M1236.0 774.0 L1272.5 781.6"/><path d="M1263.2 752.7 L1288.7 745.9"/><path d="M1238.5 720.4 L1244.5 745.0"/><path d="M1288.7 703.4 L1297.2 728.0"/><path d="M1376.2 706.8 L1371.2 744.2"/><path d="M1276.8 700.0 C1278.5 702.3 1282.5 709.9 1287.0 713.6 C1291.5 717.3 1297.8 720.4 1304.0 722.1 C1310.2 723.8 1317.3 724.6 1324.4 723.8 C1331.5 722.9 1340.0 720.1 1346.5 717.0 C1353.0 713.9 1359.2 707.9 1363.5 705.1 C1367.8 702.3 1370.6 700.9 1372.0 700.0"/></g><path d="M1256.0 709.7 L1281.0 709.7"/><path d="M1256.0 736.7 L1281.0 736.7"/><path d="M1253.0 714.7 L1253.0 731.7"/><path d="M1284.0 714.7 L1284.0 731.7"/><path d="M1312.5 682.2 C1310.5 683.5 1304.5 688.3 1300.5 690.2 C1296.5 692.1 1292.1 693.0 1288.5 693.7 C1284.9 694.4 1280.7 694.3 1279.1 694.4"/><path d="M520.0 590.2 C517.8 588.9 511.9 585.3 506.7 582.2 C501.5 579.1 494.5 574.8 488.9 571.6 C483.3 568.3 478.8 566.1 472.9 562.7 C467.0 559.3 461.0 554.8 453.3 551.1 C445.6 547.4 435.6 543.0 426.7 540.4 C417.8 537.9 408.9 536.6 400.0 536.0 C391.1 535.4 382.2 535.7 373.3 536.9 C364.4 538.1 353.5 540.6 346.7 543.1 C339.9 545.6 333.9 549.5 332.4 552.0 C331.0 554.5 333.9 556.4 337.8 558.2 C341.6 560.0 348.1 560.7 355.6 562.7 C363.0 564.6 373.3 567.1 382.2 569.8 C391.1 572.4 400.0 575.9 408.9 578.7 C417.8 581.5 428.7 584.6 435.6 586.7 C442.4 588.7 447.0 589.8 449.8 591.1 C452.6 592.4 452.7 593.2 452.4 594.7 C452.1 596.1 450.8 598.8 448.0 600.0 C445.2 601.2 440.6 600.9 435.6 601.8 C430.5 602.7 422.8 603.0 417.8 605.3 C412.7 607.7 410.4 611.3 405.3 616.0 C400.3 620.7 392.9 627.3 387.6 633.8 C382.2 640.3 377.8 647.4 373.3 655.1 C368.9 662.8 363.6 672.9 360.9 680.0 C358.2 687.1 357.6 693.6 357.3 697.8 C357.0 701.9 356.4 704.6 359.1 704.9 C361.8 705.2 367.4 703.4 373.3 699.6 C379.3 695.7 387.0 688.0 394.7 681.8 C402.4 675.6 411.3 668.4 419.6 662.2 C427.9 656.0 436.4 649.0 444.4 644.4 C452.4 639.9 461.6 636.4 467.6 634.7 C473.5 632.9 475.0 633.0 480.0 633.8 C485.0 634.5 491.9 636.7 497.8 639.1 C503.7 641.5 511.9 645.9 515.6 648.0 C519.3 650.1 519.3 651.0 520.0 651.6"/><path d="M868.5 590.2 C866.2 588.9 860.3 585.3 855.1 582.2 C849.9 579.1 843.0 574.8 837.3 571.6 C831.7 568.3 827.3 566.1 821.3 562.7 C815.4 559.3 809.5 554.8 801.8 551.1 C794.1 547.4 784.0 543.0 775.1 540.4 C766.2 537.9 757.3 536.6 748.5 536.0 C739.6 535.4 730.7 535.7 721.8 536.9 C712.9 538.1 701.9 540.6 695.1 543.1 C688.3 545.6 682.4 549.5 680.9 552.0 C679.4 554.5 682.4 556.4 686.2 558.2 C690.1 560.0 696.6 560.7 704.0 562.7 C711.4 564.6 721.8 567.1 730.7 569.8 C739.6 572.4 748.5 575.9 757.3 578.7 C766.2 581.5 777.2 584.6 784.0 586.7 C790.8 588.7 795.4 589.8 798.2 591.1 C801.0 592.4 801.2 593.2 800.9 594.7 C800.6 596.1 799.3 598.8 796.5 600.0 C793.6 601.2 789.0 600.9 784.0 601.8 C779.0 602.7 771.3 603.0 766.2 605.3 C761.2 607.7 758.8 611.3 753.8 616.0 C748.7 620.7 741.3 627.3 736.0 633.8 C730.7 640.3 726.2 647.4 721.8 655.1 C717.3 662.8 712.0 672.9 709.3 680.0 C706.7 687.1 706.1 693.6 705.8 697.8 C705.5 701.9 704.9 704.6 707.6 704.9 C710.2 705.2 715.9 703.4 721.8 699.6 C727.7 695.7 735.4 688.0 743.1 681.8 C750.8 675.6 759.7 668.4 768.0 662.2 C776.3 656.0 784.9 649.0 792.9 644.4 C800.9 639.9 810.1 636.4 816.0 634.7 C821.9 632.9 823.4 633.0 828.5 633.8 C833.5 634.5 840.3 636.7 846.2 639.1 C852.2 641.5 860.3 645.9 864.0 648.0 C867.7 650.1 867.7 651.0 868.5 651.6"/><path d="M1216.9 590.2 C1214.7 588.9 1208.8 585.3 1203.6 582.2 C1198.4 579.1 1191.4 574.8 1185.8 571.6 C1180.2 568.3 1175.7 566.1 1169.8 562.7 C1163.9 559.3 1157.9 554.8 1150.2 551.1 C1142.5 547.4 1132.5 543.0 1123.6 540.4 C1114.7 537.9 1105.8 536.6 1096.9 536.0 C1088.0 535.4 1079.1 535.7 1070.2 536.9 C1061.3 538.1 1050.4 540.6 1043.6 543.1 C1036.8 545.6 1030.8 549.5 1029.3 552.0 C1027.9 554.5 1030.8 556.4 1034.7 558.2 C1038.5 560.0 1045.0 560.7 1052.5 562.7 C1059.9 564.6 1070.2 567.1 1079.1 569.8 C1088.0 572.4 1096.9 575.9 1105.8 578.7 C1114.7 581.5 1125.6 584.6 1132.5 586.7 C1139.3 588.7 1143.9 589.8 1146.7 591.1 C1149.5 592.4 1149.6 593.2 1149.3 594.7 C1149.0 596.1 1147.7 598.8 1144.9 600.0 C1142.1 601.2 1137.5 600.9 1132.5 601.8 C1127.4 602.7 1119.7 603.0 1114.7 605.3 C1109.6 607.7 1107.3 611.3 1102.2 616.0 C1097.2 620.7 1089.8 627.3 1084.5 633.8 C1079.1 640.3 1074.7 647.4 1070.2 655.1 C1065.8 662.8 1060.5 672.9 1057.8 680.0 C1055.1 687.1 1054.5 693.6 1054.2 697.8 C1053.9 701.9 1053.3 704.6 1056.0 704.9 C1058.7 705.2 1064.3 703.4 1070.2 699.6 C1076.2 695.7 1083.9 688.0 1091.6 681.8 C1099.3 675.6 1108.2 668.4 1116.5 662.2 C1124.8 656.0 1133.3 649.0 1141.3 644.4 C1149.3 639.9 1158.5 636.4 1164.5 634.7 C1170.4 632.9 1171.9 633.0 1176.9 633.8 C1181.9 634.5 1188.8 636.7 1194.7 639.1 C1200.6 641.5 1208.8 645.9 1212.5 648.0 C1216.2 650.1 1216.2 651.0 1216.9 651.6"/><path d="M751.5 434.9 C754.4 436.6 762.3 442.8 768.5 445.1 C774.8 447.4 781.9 449.1 789.0 448.5 C796.0 447.9 803.1 445.9 811.0 441.7 C819.0 437.4 828.0 429.8 836.5 423.0 C845.0 416.2 854.1 408.5 862.0 400.9 C870.0 393.2 878.2 382.9 884.1 377.1 C890.1 371.3 894.8 367.2 897.8 366.1 C900.7 364.9 901.4 367.0 902.0 370.3 C902.6 373.6 902.4 379.1 901.1 385.6 C899.9 392.1 897.7 401.2 894.3 409.4 C890.9 417.6 885.3 427.5 880.8 434.9 C876.2 442.3 872.2 447.9 867.1 453.6 C862.0 459.3 855.8 464.9 850.1 468.9 C844.5 472.9 838.8 474.8 833.1 477.4 C827.5 479.9 819.5 482.2 816.1 484.2 C812.7 486.2 812.6 487.6 812.8 489.3 C812.9 491.0 813.0 492.3 817.0 494.4 C821.0 496.5 829.0 499.1 836.5 502.0 C844.1 505.0 853.5 508.8 862.0 512.2 C870.5 515.6 879.0 518.9 887.5 522.5 C896.0 526.0 906.0 529.7 913.0 533.5 C920.1 537.3 927.2 543.1 930.0 545.1"/><path d="M751.5 627.6 C754.4 629.3 762.3 635.5 768.5 637.8 C774.8 640.1 781.9 641.8 789.0 641.2 C796.0 640.6 803.1 638.6 811.0 634.4 C819.0 630.1 828.0 622.5 836.5 615.7 C845.0 608.9 854.1 601.2 862.0 593.6 C870.0 585.9 878.2 575.6 884.1 569.8 C890.1 564.0 894.8 559.9 897.8 558.8 C900.7 557.6 901.4 559.7 902.0 563.0 C902.6 566.3 902.4 571.8 901.1 578.3 C899.9 584.8 897.7 593.9 894.3 602.1 C890.9 610.3 885.3 620.2 880.8 627.6 C876.2 635.0 872.2 640.6 867.1 646.3 C862.0 652.0 855.8 657.6 850.1 661.6 C844.5 665.6 838.8 667.5 833.1 670.1 C827.5 672.6 819.5 674.9 816.1 676.9 C812.7 678.9 812.6 680.3 812.8 682.0 C812.9 683.7 813.0 685.0 817.0 687.1 C821.0 689.2 829.0 691.8 836.5 694.8 C844.1 697.7 853.5 701.6 862.0 705.0 C870.5 708.4 879.0 711.6 887.5 715.2 C896.0 718.7 906.0 722.4 913.0 726.2 C920.1 730.0 927.2 735.8 930.0 737.8"/><path d="M660.0 755.6 C663.5 752.9 673.9 744.4 681.3 739.6 C688.7 734.8 696.7 731.1 704.4 727.0 C712.1 722.9 720.8 718.3 727.6 714.7 C734.4 711.1 741.1 707.2 745.3 705.4 C749.5 703.5 749.0 703.6 753.0 703.6 C757.0 703.6 763.5 704.1 769.0 705.5 C774.5 706.9 783.2 710.9 786.0 712.0"/><path d="M1100.0 434.9 C1102.8 436.6 1110.8 442.8 1117.0 445.1 C1123.2 447.4 1130.3 449.1 1137.4 448.5 C1144.5 447.9 1151.6 445.9 1159.5 441.7 C1167.4 437.4 1176.5 429.8 1185.0 423.0 C1193.5 416.2 1202.6 408.5 1210.5 400.9 C1218.4 393.2 1226.6 382.9 1232.6 377.1 C1238.5 371.3 1243.2 367.2 1246.2 366.1 C1249.2 364.9 1249.9 367.0 1250.5 370.3 C1251.0 373.6 1250.9 379.1 1249.6 385.6 C1248.3 392.1 1246.2 401.2 1242.8 409.4 C1239.4 417.6 1233.7 427.5 1229.2 434.9 C1224.7 442.3 1220.7 447.9 1215.6 453.6 C1210.5 459.3 1204.3 464.9 1198.6 468.9 C1192.9 472.9 1187.3 474.8 1181.6 477.4 C1175.9 479.9 1168.0 482.2 1164.6 484.2 C1161.2 486.2 1161.1 487.6 1161.2 489.3 C1161.3 491.0 1161.5 492.3 1165.5 494.4 C1169.4 496.5 1177.5 499.1 1185.0 502.0 C1192.5 505.0 1202.0 508.8 1210.5 512.2 C1219.0 515.6 1227.5 518.9 1236.0 522.5 C1244.5 526.0 1254.4 529.7 1261.5 533.5 C1268.6 537.3 1275.7 543.1 1278.5 545.1"/><path d="M1100.0 627.6 C1102.8 629.3 1110.8 635.5 1117.0 637.8 C1123.2 640.1 1130.3 641.8 1137.4 641.2 C1144.5 640.6 1151.6 638.6 1159.5 634.4 C1167.4 630.1 1176.5 622.5 1185.0 615.7 C1193.5 608.9 1202.6 601.2 1210.5 593.6 C1218.4 585.9 1226.6 575.6 1232.6 569.8 C1238.5 564.0 1243.2 559.9 1246.2 558.8 C1249.2 557.6 1249.9 559.7 1250.5 563.0 C1251.0 566.3 1250.9 571.8 1249.6 578.3 C1248.3 584.8 1246.2 593.9 1242.8 602.1 C1239.4 610.3 1233.7 620.2 1229.2 627.6 C1224.7 635.0 1220.7 640.6 1215.6 646.3 C1210.5 652.0 1204.3 657.6 1198.6 661.6 C1192.9 665.6 1187.3 667.5 1181.6 670.1 C1175.9 672.6 1168.0 674.9 1164.6 676.9 C1161.2 678.9 1161.1 680.3 1161.2 682.0 C1161.3 683.7 1161.5 685.0 1165.5 687.1 C1169.4 689.2 1177.5 691.8 1185.0 694.8 C1192.5 697.7 1202.0 701.6 1210.5 705.0 C1219.0 708.4 1227.5 711.6 1236.0 715.2 C1244.5 718.7 1254.4 722.4 1261.5 726.2 C1268.6 730.0 1275.7 735.8 1278.5 737.8"/><path d="M1008.5 755.6 C1012.0 752.9 1022.4 744.4 1029.8 739.6 C1037.2 734.8 1045.1 731.1 1052.8 727.0 C1060.6 722.9 1069.2 718.3 1076.0 714.7 C1082.9 711.1 1089.5 707.2 1093.8 705.4 C1098.0 703.5 1097.5 703.6 1101.5 703.6 C1105.4 703.6 1112.0 704.1 1117.5 705.5 C1123.0 706.9 1131.6 710.9 1134.5 712.0"/><path d="M760.0 441.0 C758.3 439.7 755.0 436.2 750.0 433.0 C745.0 429.8 736.7 425.0 730.0 422.0 C723.3 419.0 716.7 416.6 710.0 415.0 C703.3 413.4 698.3 412.8 690.0 412.5 C681.7 412.2 670.0 411.8 660.0 413.0 C650.0 414.2 637.4 417.5 630.0 420.0 C622.6 422.5 617.2 425.8 615.5 428.0 C613.8 430.2 615.9 431.0 620.0 433.0 C624.1 435.0 631.7 437.8 640.0 440.0 C648.3 442.2 660.0 443.3 670.0 446.0 C680.0 448.7 690.0 452.7 700.0 456.0 C710.0 459.3 724.0 463.5 730.0 466.0 C736.0 468.5 735.7 469.2 736.0 471.0 C736.3 472.8 735.5 475.5 732.0 477.0 C728.5 478.5 720.3 478.5 715.0 480.0 C709.7 481.5 705.0 483.5 700.0 486.0 C695.0 488.5 688.3 492.7 685.0 495.0 C681.7 497.3 680.8 499.2 680.0 500.0"/><path d="M760.0 633.7 C758.3 632.4 755.0 628.9 750.0 625.7 C745.0 622.5 736.7 617.7 730.0 614.7 C723.3 611.7 716.7 609.3 710.0 607.7 C703.3 606.1 698.3 605.5 690.0 605.2 C681.7 604.9 670.0 604.5 660.0 605.7 C650.0 607.0 637.4 610.2 630.0 612.7 C622.6 615.2 617.2 618.5 615.5 620.7 C613.8 622.9 615.9 623.7 620.0 625.7 C624.1 627.7 631.7 630.5 640.0 632.7 C648.3 634.9 660.0 636.0 670.0 638.7 C680.0 641.4 690.0 645.4 700.0 648.7 C710.0 652.0 724.0 656.2 730.0 658.7 C736.0 661.2 735.7 661.9 736.0 663.7 C736.3 665.5 735.5 668.2 732.0 669.7 C728.5 671.2 720.3 671.2 715.0 672.7 C709.7 674.2 705.0 676.2 700.0 678.7 C695.0 681.2 688.3 685.4 685.0 687.7 C681.7 690.0 680.8 691.9 680.0 692.7"/><path d="M1108.5 441.0 C1106.8 439.7 1103.5 436.2 1098.5 433.0 C1093.5 429.8 1085.1 425.0 1078.5 422.0 C1071.8 419.0 1065.1 416.6 1058.5 415.0 C1051.8 413.4 1046.8 412.8 1038.5 412.5 C1030.1 412.2 1018.5 411.8 1008.5 413.0 C998.5 414.2 985.9 417.5 978.5 420.0 C971.0 422.5 965.6 425.8 964.0 428.0 C962.3 430.2 964.4 431.0 968.5 433.0 C972.5 435.0 980.1 437.8 988.5 440.0 C996.8 442.2 1008.5 443.3 1018.5 446.0 C1028.5 448.7 1038.5 452.7 1048.5 456.0 C1058.5 459.3 1072.5 463.5 1078.5 466.0 C1084.5 468.5 1084.1 469.2 1084.5 471.0 C1084.8 472.8 1084.0 475.5 1080.5 477.0 C1077.0 478.5 1068.8 478.5 1063.5 480.0 C1058.1 481.5 1053.5 483.5 1048.5 486.0 C1043.5 488.5 1036.8 492.7 1033.5 495.0 C1030.1 497.3 1029.3 499.2 1028.5 500.0"/><path d="M1108.5 633.7 C1106.8 632.4 1103.5 628.9 1098.5 625.7 C1093.5 622.5 1085.1 617.7 1078.5 614.7 C1071.8 611.7 1065.1 609.3 1058.5 607.7 C1051.8 606.1 1046.8 605.5 1038.5 605.2 C1030.1 604.9 1018.5 604.5 1008.5 605.7 C998.5 607.0 985.9 610.2 978.5 612.7 C971.0 615.2 965.6 618.5 964.0 620.7 C962.3 622.9 964.4 623.7 968.5 625.7 C972.5 627.7 980.1 630.5 988.5 632.7 C996.8 634.9 1008.5 636.0 1018.5 638.7 C1028.5 641.4 1038.5 645.4 1048.5 648.7 C1058.5 652.0 1072.5 656.2 1078.5 658.7 C1084.5 661.2 1084.1 661.9 1084.5 663.7 C1084.8 665.5 1084.0 668.2 1080.5 669.7 C1077.0 671.2 1068.8 671.2 1063.5 672.7 C1058.1 674.2 1053.5 676.2 1048.5 678.7 C1043.5 681.2 1036.8 685.4 1033.5 687.7 C1030.1 690.0 1029.3 691.9 1028.5 692.7"/></g>
<g fill="none" stroke="#58298f" stroke-width="3" stroke-linecap="round" stroke-linejoin="round"><path d="M246.5 222.1 C245.3 223.1 241.6 225.4 239.6 228.0 C237.6 230.6 235.6 234.0 234.3 237.6 C233.1 241.2 232.3 245.6 232.1 249.3 C231.9 253.0 232.3 257.4 233.2 260.0 C234.1 262.6 235.6 264.1 237.5 264.8 C239.4 265.5 242.6 265.3 244.4 264.3 C246.2 263.3 247.6 260.9 248.1 259.0 C248.6 257.1 248.6 254.3 247.6 253.1 C246.6 251.8 244.1 251.2 242.3 251.5 C240.5 251.8 238.3 253.5 236.9 254.7 C235.5 255.9 234.2 258.2 233.7 258.9"/><path d="M266.8 252.0 C267.1 252.2 268.0 253.0 268.6 253.4 C269.2 253.8 270.2 254.5 270.5 254.7"/><path d="M275.7 234.0 C276.9 233.0 280.7 229.6 282.6 228.1 C284.6 226.6 285.5 225.8 287.4 225.0 C289.3 224.2 291.9 223.5 293.8 223.6 C295.7 223.7 297.8 225.2 298.6 225.5"/><path d="M287.4 219.6 C287.4 223.2 287.5 233.9 287.5 241.0 C287.5 248.1 287.4 258.8 287.4 262.3"/><path d="M298.0 225.5 C298.1 228.6 298.2 237.7 298.3 244.0 C298.4 250.3 298.6 260.1 298.6 263.3"/><path d="M298.6 253.7 C299.3 252.2 301.5 247.3 303.0 245.0 C304.5 242.7 306.3 240.2 307.7 239.9 C309.1 239.7 310.6 241.7 311.5 243.5 C312.4 245.3 312.7 248.7 313.0 251.0 C313.3 253.3 313.0 256.3 313.5 257.5 C314.0 258.7 315.6 258.2 316.0 258.3"/><path d="M320.5 248.4 C321.5 247.7 325.0 246.1 326.3 244.1 C327.6 242.1 327.6 239.6 328.5 236.7 C329.4 233.8 330.6 227.9 331.7 226.5 C332.8 225.1 335.0 226.0 335.4 228.1 C335.8 230.2 335.4 235.9 334.3 239.3 C333.2 242.7 329.2 247.0 329.0 248.4 C328.8 249.8 331.1 249.5 333.3 247.9 C335.5 246.3 340.8 240.3 342.3 238.8"/><path d="M359.1 226.4 C359.5 231.5 360.7 246.8 361.5 257.0 C362.3 267.2 363.7 282.4 364.1 287.5"/><path d="M362.0 236.3 C362.9 235.1 365.7 230.5 367.6 229.2 C369.5 227.9 371.9 227.8 373.3 228.5 C374.7 229.2 375.9 231.0 376.2 233.5 C376.4 236.0 375.9 240.6 374.8 243.4 C373.7 246.2 371.5 248.9 369.8 250.6 C368.1 252.3 365.6 252.9 364.8 253.4"/><path d="M396.1 234.2 C395.9 234.0 396.2 232.9 394.7 232.8 C393.2 232.7 388.8 231.7 386.9 233.5 C385.0 235.3 383.8 239.6 383.3 243.4 C382.8 247.2 383.1 254.4 384.0 256.3 C384.9 258.2 387.2 256.6 389.0 254.8 C390.8 253.0 393.3 248.7 394.7 245.6 C396.1 242.5 397.0 236.7 397.5 236.3 C398.0 235.9 397.3 240.8 397.5 243.4 C397.7 246.0 398.2 251.2 398.9 252.0 C399.6 252.8 399.6 250.1 401.8 248.4 C404.0 246.7 408.0 244.0 412.0 242.0 C416.0 240.0 423.7 237.2 426.0 236.3"/><path d="M416.7 220.7 C416.8 223.9 416.9 233.7 417.0 240.0 C417.1 246.3 417.3 255.3 417.4 258.4"/><path d="M430.2 220.7 C430.3 223.9 430.8 233.7 431.0 240.0 C431.2 246.3 431.6 255.3 431.7 258.4"/><path d="M422.4 249.9 C424.8 248.4 433.0 243.7 437.0 241.0 C441.0 238.3 444.1 235.6 446.5 234.0 C448.9 232.4 450.3 231.2 451.5 231.5 C452.7 231.8 453.8 234.4 453.5 236.0 C453.2 237.6 451.5 239.5 450.0 241.0 C448.5 242.5 445.2 243.3 444.5 245.0 C443.8 246.7 444.4 249.4 445.5 251.0 C446.6 252.6 449.0 254.2 451.0 254.5 C453.0 254.8 455.8 254.6 457.5 253.0 C459.2 251.4 460.8 247.2 461.5 245.0 C462.2 242.8 461.9 240.8 462.0 240.0"/><path d="M466.0 230.0 C466.0 232.7 466.1 240.6 466.2 246.0 C466.3 251.4 466.4 259.8 466.5 262.5"/><path d="M467.0 239.0 C467.5 237.8 468.8 234.0 470.0 232.0 C471.2 230.0 473.3 227.8 474.0 227.0"/><path d="M487.0 228.0 C487.0 230.0 487.0 236.0 487.0 240.0 C487.0 244.0 487.0 250.0 487.0 252.0"/><path d="M487.5 234.0 C488.3 233.3 490.6 230.6 492.5 230.0 C494.4 229.4 497.1 229.2 499.0 230.5 C500.9 231.8 502.8 235.1 504.0 237.5 C505.2 239.9 505.3 244.1 506.0 245.0 C506.7 245.9 507.7 243.3 508.0 243.0"/><path d="M524.0 236.5 L524.5 246.0"/></g>
<g stroke="#4e535b" stroke-width="1" fill="none"><path d="M170.5 964 V999.5 H206"/></g>
<text x="172" y="965" font-family="Liberation Sans" font-size="15" fill="#4e535b">y</text>
<text x="208" y="1000" font-family="Liberation Sans" font-size="15" fill="#4e535b">x</text>
</g></svg>
<!-- left toolbar -->
<div class="a" style="left:58px;top:190px;width:62px;height:850px;background:#ebecf0"></div>
<div class="a" style="left:61px;top:191px;width:56px;height:1px;background:#cfd0d6"></div>
<svg style="left:0;top:0" width="2000" height="1125"><g transform="translate(59.0 199.0)"><path d="M7 3 L7 18 L10 15 L13 21 L15 20 L12 14 L17 14 Z" fill="#fff" stroke="#111" stroke-width="1.1"/></g><g transform="translate(87.0 199.0)"><ellipse cx="11" cy="10" rx="2.5" ry="1.8" fill="#fff" stroke="#222" stroke-width="1"/><path d="M17 21 H22 V16 Z" fill="#6f6f72"/></g><g transform="translate(59.0 226.6)"><path d="M3 18 L8 5 L16 16" fill="none" stroke="#222" stroke-width="1.1"/><rect x="2" y="17" width="2.5" height="2.5" fill="#111"/><circle cx="8" cy="5" r="1.3" fill="#fff" stroke="#111"/><circle cx="16" cy="16" r="1.3" fill="#fff" stroke="#111"/><path d="M17 21 H22 V16 Z" fill="#6f6f72"/></g><g transform="translate(87.0 226.6)"><path d="M5 6 Q19 0 17 10 Q15 18 5 17" fill="none" stroke="#222" stroke-width="1.1"/><rect x="2" y="4" width="3" height="3" fill="#fff" stroke="#111" stroke-width="1"/><rect x="16" y="2" width="3" height="3" fill="#fff" stroke="#111" stroke-width="1"/><rect x="2" y="16" width="3" height="3" fill="#fff" stroke="#111" stroke-width="1"/><rect x="17" y="18" width="3" height="3" fill="#fff" stroke="#111" stroke-width="1"/><path d="M17 21 H22 V16 Z" fill="#6f6f72"/></g><g transform="translate(59.0 254.2)"><circle cx="10" cy="11" r="8.5" fill="none" stroke="#333" stroke-width="1"/><path d="M10 11 L16 5" stroke="#222" stroke-width="1"/><circle cx="10" cy="11" r="1.3" fill="#fff" stroke="#111"/><rect x="14.5" y="3.5" width="3" height="3" fill="#fff" stroke="#111" stroke-width="1"/><path d="M17 21 H22 V16 Z" fill="#6f6f72"/></g><g transform="translate(87.0 254.2)"><ellipse cx="11" cy="11" rx="9.5" ry="6.5" fill="none" stroke="#333" stroke-width="1"/><path d="M11 11 H18 M11 11 V5" stroke="#222" stroke-width="0.8"/><rect x="9.5" y="3.5" width="3" height="3" fill="#fff" stroke="#111" stroke-width="1"/><rect x="9.5" y="9.5" width="3" height="3" fill="#fff" stroke="#111" stroke-width="1"/><rect x="17" y="9.5" width="3" height="3" fill="#fff" stroke="#111" stroke-width="1"/><path d="M17 21 H22 V16 Z" fill="#6f6f72"/></g><g transform="translate(59.0 281.8)"><path d="M3 3 Q12 4 17 12 L3 19 Z" fill="none" stroke="#333" stroke-width="1"/><circle cx="3" cy="3" r="1.4" fill="#fff" stroke="#111"/><circle cx="3" cy="19" r="1.4" fill="#fff" stroke="#111"/><rect x="16" y="10.5" width="3" height="3" fill="#fff" stroke="#111" stroke-width="1"/><path d="M17 21 H22 V16 Z" fill="#6f6f72"/></g><g transform="translate(87.0 281.8)"><rect x="3.5" y="5" width="16" height="11" fill="none" stroke="#333" stroke-width="1.1"/><circle cx="3.5" cy="16" r="1.4" fill="#fff" stroke="#111"/><circle cx="19.5" cy="5" r="1.4" fill="#fff" stroke="#111"/><path d="M17 21 H22 V16 Z" fill="#6f6f72"/></g><g transform="translate(59.0 309.4)"><path d="M6 4 H15 L19 11 L15 18 H6 L2 11 Z" fill="none" stroke="#333" stroke-width="1"/><path d="M10 11 H17" stroke="#222" stroke-width="1"/><circle cx="10" cy="11" r="1.3" fill="#fff" stroke="#111"/><circle cx="17" cy="11" r="1.3" fill="#fff" stroke="#111"/><path d="M17 21 H22 V16 Z" fill="#6f6f72"/></g><g transform="translate(87.0 309.4)"><path d="M3 3 H10 Q18 4 18 18" fill="none" stroke="#111" stroke-width="1.8"/><path d="M18 3 V18" stroke="#aaa" stroke-width="0.6"/><rect x="1.5" y="1.5" width="3" height="3" fill="#fff" stroke="#111" stroke-width="1"/><rect x="16.5" y="17" width="3" height="3" fill="#fff" stroke="#111" stroke-width="1"/><path d="M17 21 H22 V16 Z" fill="#6f6f72"/></g><g transform="translate(59.0 337.0)"><path d="M5 4 L18 3 L16 19 L4 16 Z" fill="#8a97e6" stroke="#333" stroke-width="1"/><path d="M11 4 L10 17 M4 10 L17 11" stroke="#c7cdf4" stroke-width="0.9"/><rect x="3" y="2" width="3" height="3" fill="#fff" stroke="#111" stroke-width="1.1"/><rect x="17" y="2" width="3" height="3" fill="#fff" stroke="#111" stroke-width="1.1"/><rect x="1" y="14" width="3" height="3" fill="#fff" stroke="#111" stroke-width="1.1"/><rect x="13" y="18" width="3" height="3" fill="#fff" stroke="#111" stroke-width="1.1"/><path d="M17 21 H22 V16 Z" fill="#6f6f72"/></g><g transform="translate(87.0 337.0)"><path d="M2 7 L9 2 L19 8 L18 16 L12 19 L12 11 Z" fill="#fff" stroke="#222" stroke-width="1"/><path d="M9 2 L19 8 L18 16 L12 11 Z" fill="#7d8ce2" stroke="#222" stroke-width="0.8"/><path d="M12 11 V20 L18 16" fill="none" stroke="#111" stroke-width="1.1"/><path d="M17 21 H22 V16 Z" fill="#6f6f72"/></g><g transform="translate(59.0 364.6)"><path d="M2 7 L10 2 L18 5 V15 L10 20 L2 16 Z" fill="#5f72d6" stroke="#26358a" stroke-width="1.2"/><path d="M2 7 L10 11 L18 5 M10 11 V20" fill="none" stroke="#b6c0f4" stroke-width="1"/><path d="M17 21 H22 V16 Z" fill="#6f6f72"/></g><g transform="translate(87.0 364.6)"><circle cx="15" cy="8" r="6.5" fill="#6274d4" stroke="#26358a" stroke-width="1"/><circle cx="8" cy="15" r="6.5" fill="#6b7cd8" stroke="#26358a" stroke-width="1"/><path d="M3 14 Q8 12 13 15 M15 2 V14" stroke="#c9d0f5" stroke-width="0.8" fill="none"/><path d="M17 21 H22 V16 Z" fill="#6f6f72"/></g><g transform="translate(59.0 392.2)"><ellipse cx="9" cy="3" rx="5" ry="2" fill="none" stroke="#222" stroke-width="1"/><path d="M1 10 Q10 14 18 10 V19 Q10 22 1 19 Z" fill="#7b8be2" stroke="#222" stroke-width="1"/><ellipse cx="9" cy="17" rx="4" ry="1.8" fill="#c9d0f5"/><path d="M17 21 H22 V16 Z" fill="#6f6f72"/></g><g transform="translate(87.0 392.2)"><path d="M3 14 L9 3 L20 6 L15 19 Z" fill="#6f80dd" stroke="#26358a" stroke-width="1"/><path d="M6 9 L17 12 M12 4 L9 17" stroke="#26358a" stroke-width="0.8"/><path d="M17 21 H22 V16 Z" fill="#6f6f72"/></g><g transform="translate(59.0 419.8)"><path d="M2 6 L6 3 L9 6 L11 4 L13 7 L11 10 L8 12 L4 11 Z" fill="#f0a820" stroke="#333" stroke-width="0.9"/><path d="M8 12 L12 9 L15 12 L18 11 L19 15 L16 17 L18 20 L14 21 L12 19 L9 20 L8 16 Z" fill="#fff" stroke="#333" stroke-width="0.9"/></g><g transform="translate(87.0 419.8)"><path d="M2 21 L4 9 L9 14 L18 1 L13 15 L20 14 L13 19 Z" fill="#f5b21a" stroke="#222" stroke-width="0.9"/></g><g transform="translate(59.0 447.4)"><path d="M9 0 H13 L11 10 Z" fill="#26358a"/><rect x="1" y="9" width="11" height="5" fill="#fff" stroke="#111" stroke-width="1.2"/><path d="M11 14 L14 11 L20 17 L17 20 Z" fill="#fff" stroke="#333" stroke-width="0.9"/></g><g transform="translate(87.0 447.4)"><path d="M11 0 H16 L13 12 Z" fill="#26358a"/><rect x="2" y="9" width="18" height="5" fill="#fff" stroke="#111" stroke-width="1.2"/><path d="M12 9 V14" stroke="#111" stroke-width="1"/></g><g transform="translate(59.0 475.0)"><circle cx="12" cy="7" r="4.5" fill="#8a97e6" stroke="#111" stroke-width="1"/><circle cx="7" cy="14" r="4.5" fill="#fff" stroke="#111" stroke-width="1.2"/><circle cx="15" cy="14" r="4.5" fill="#1b2470" stroke="#111" stroke-width="1"/><path d="M10 12 Q12 15 10 17" stroke="#111" stroke-width="1.5" fill="none"/><path d="M17 21 H22 V16 Z" fill="#6f6f72"/></g><g transform="translate(87.0 475.0)"><circle cx="11" cy="6" r="4" fill="#8a97e6" stroke="#333" stroke-width="0.9"/><circle cx="6" cy="15" r="3.8" fill="#fff" stroke="#222" stroke-width="1"/><circle cx="16" cy="15" r="3.8" fill="#1b2470" stroke="#111" stroke-width="1"/></g><g transform="translate(59.0 502.6)"><path d="M4 4 Q15 4 17 17" fill="none" stroke="#111" stroke-width="1.2"/><path d="M15 15 L17 19 L19 15" fill="#111"/><rect x="2.5" y="2.5" width="3" height="3" fill="#fff" stroke="#111" stroke-width="1.1"/><rect x="15.5" y="11.5" width="3" height="3" fill="#fff" stroke="#111" stroke-width="1.1"/></g><g transform="translate(87.0 502.6)"><path d="M3 5 Q14 5 17 18" fill="none" stroke="#111" stroke-width="2"/><path d="M6 2 Q18 2 21 16" fill="none" stroke="#333" stroke-width="1" stroke-dasharray="1 1.5"/><rect x="10" y="1" width="3" height="3" fill="#fff" stroke="#111" stroke-width="1.1"/><rect x="18" y="13" width="3" height="3" fill="#fff" stroke="#111" stroke-width="1.1"/><path d="M17 21 H22 V16 Z" fill="#6f6f72"/></g><g transform="translate(59.0 530.2)"><path d="M2 2 H19 V7 H14 V20 H7 V7 H2 Z" fill="#8a97e6" stroke="#1f2f86" stroke-width="1.3"/><path d="M5 4 H16 M10 8 V18" stroke="#c9d0f5" stroke-width="1"/></g><g transform="translate(87.0 530.2)"><rect x="2" y="13" width="6" height="6" fill="#fff" stroke="#222" stroke-width="1.1"/><path d="M8 13 L14 7" stroke="#333" stroke-width="1.1"/><path d="M11 7 H14 V10" fill="none" stroke="#333" stroke-width="1"/><rect x="14" y="1" width="6" height="6" fill="#8a97e6" stroke="#333" stroke-width="1.2"/><path d="M17 21 H22 V16 Z" fill="#6f6f72"/></g><g transform="translate(59.0 557.8)"><rect x="1" y="1" width="5" height="5" fill="#8a97e6" stroke="#333" stroke-width="1.2"/><rect x="9" y="6" width="5" height="5" fill="#8a97e6" stroke="#333" stroke-width="1.2"/><rect x="13" y="3" width="5" height="5" fill="#8a97e6" stroke="#333" stroke-width="1.2"/><rect x="1" y="13" width="5" height="5" fill="#fff" stroke="#333" stroke-width="1.2"/><rect x="12" y="14" width="6" height="6" fill="#8a97e6" stroke="#333" stroke-width="1.2"/></g><g transform="translate(87.0 557.8)"><rect x="1" y="2" width="6" height="14" fill="#fff" stroke="#222" stroke-width="1.2"/><path d="M8 4 H12 L12 7" fill="none" stroke="#222" stroke-width="1"/><path d="M10 20 L20 10 L23 13 L13 23 Z" fill="#8a97e6" stroke="#333" stroke-width="1"/></g><g transform="translate(59.0 585.4)"><path d="M2 6 L10 1 L19 4 L19 15 L11 20 L2 16 Z" fill="#6f80dd" stroke="#2a3a90" stroke-width="1.2"/><path d="M2 6 L11 9 L19 4 M11 9 V20" fill="none" stroke="#a9b4f0" stroke-width="1"/><rect x="8" y="13" width="6" height="6" fill="#fff" stroke="#333" stroke-width="1"/><path d="M17 21 H22 V16 Z" fill="#6f6f72"/></g><g transform="translate(87.0 585.4)"><path d="M2 18 L6 13 H21 L17 18 Z" fill="#8a97e6" stroke="#333" stroke-width="0.9"/><path d="M7 14 V3 M11 14 V2 M15 14 V3" stroke="#fff" stroke-width="2.2"/><path d="M17 21 H22 V16 Z" fill="#6f6f72"/></g><g transform="translate(59.0 613.0)"><rect x="1" y="2" width="4.5" height="4.5" fill="#fff" stroke="#111" stroke-width="1.2"/><rect x="1" y="9" width="4.5" height="4.5" fill="#fff" stroke="#111" stroke-width="1.2"/><rect x="1" y="16" width="4.5" height="4.5" fill="#fff" stroke="#111" stroke-width="1.2"/><rect x="8" y="2" width="4.5" height="4.5" fill="#fff" stroke="#111" stroke-width="1.2"/><rect x="8" y="9" width="4.5" height="4.5" fill="#fff" stroke="#111" stroke-width="1.2"/><rect x="8" y="16" width="4.5" height="4.5" fill="#fff" stroke="#111" stroke-width="1.2"/><rect x="15" y="2" width="4.5" height="4.5" fill="#fff" stroke="#111" stroke-width="1.2"/><rect x="15" y="9" width="4.5" height="4.5" fill="#fff" stroke="#111" stroke-width="1.2"/><rect x="15" y="16" width="4.5" height="4.5" fill="#fff" stroke="#111" stroke-width="1.2"/><path d="M17 21 H22 V16 Z" fill="#6f6f72"/></g><g transform="translate(87.0 613.0)"><path d="M11 0 V22" stroke="#cc2020" stroke-width="1" stroke-dasharray="2 1"/><rect x="6" y="2" width="9" height="5" fill="#f4dede" stroke="#111" stroke-width="1.1"/><rect x="6" y="8" width="9" height="5" fill="#f4dede" stroke="#111" stroke-width="1.1"/><rect x="6" y="14" width="9" height="5" fill="#f4dede" stroke="#111" stroke-width="1.1"/><path d="M17 21 H22 V16 Z" fill="#6f6f72"/></g><g transform="translate(59.0 640.6)"><path d="M1 5 L6 2 L8 14 L3 19 Z" fill="#eee" stroke="#111" stroke-width="1.1"/><path d="M8 4 L10 1 L19 4 L16 20 L11 21 L8 14 Z" fill="#7584de" stroke="#111" stroke-width="1.1"/><path d="M17 21 H22 V16 Z" fill="#6f6f72"/></g><g transform="translate(87.0 640.6)"><path d="M3 11 L8 17 L19 3" fill="none" stroke="#111" stroke-width="2.4"/><path d="M17 21 H22 V16 Z" fill="#6f6f72"/></g><g transform="translate(59.0 668.2)"><path d="M1 8 L7 4 L12 7 V16 L6 19 L1 16 Z" fill="#d4d4d4" stroke="#333" stroke-width="0.9"/><path d="M14 2 L20 17 Q15 20 9 17 Z" fill="#c0c0c0" stroke="#333" stroke-width="0.9"/><path d="M17 21 H22 V16 Z" fill="#6f6f72"/></g><g transform="translate(87.0 668.2)"><path d="M2 17 L11 7 L20 16 L12 21 Z" fill="#f6b84a" stroke="#333" stroke-width="1"/><path d="M11 7 L12 21" stroke="#333" stroke-width="0.8"/><path d="M10 3 Q13 0 19 2 L19 0 L22 3 L19 6 V4 Q14 3 11 6" fill="#888" stroke="#333" stroke-width="0.6"/><path d="M17 21 H22 V16 Z" fill="#6f6f72"/></g></svg>
<svg style="left:0;top:0" width="2000" height="1125"><g transform="translate(67.5 153)"><rect x="2" y="14" width="6" height="6" fill="#fff" stroke="#111" stroke-width="1.2"/><path d="M8 14 L14 8" stroke="#333" stroke-width="1.2"/><path d="M11 8 H14 V11" fill="none" stroke="#333" stroke-width="1"/><rect x="14" y="2" width="6" height="6" fill="#8a97e6" stroke="#333" stroke-width="1.2"/></g><g transform="translate(95.1 153)"><path d="M2 19 C6 19 6 2 11 2 C16 2 16 19 20 19" fill="none" stroke="#111" stroke-width="1.4"/><path d="M11 19 V6 M9 9 L11 6 L13 9" fill="none" stroke="#111" stroke-width="1.2"/><rect x="1" y="17" width="3.5" height="3.5" fill="#fff" stroke="#111" stroke-width="1"/><rect x="18" y="17" width="3.5" height="3.5" fill="#fff" stroke="#111" stroke-width="1"/><path d="M17 21 H22 V16 Z" fill="#6f6f72"/></g><g transform="translate(122.7 153)"><rect x="1" y="1" width="5" height="5" fill="#8a97e6" stroke="#333" stroke-width="1.2"/><rect x="9" y="6" width="5" height="5" fill="#8a97e6" stroke="#333" stroke-width="1.2"/><rect x="13" y="3" width="5" height="5" fill="#8a97e6" stroke="#333" stroke-width="1.2"/><rect x="1" y="13" width="5" height="5" fill="#e8e8e8" stroke="#333" stroke-width="1.2"/><rect x="12" y="14" width="6" height="6" fill="#8a97e6" stroke="#333" stroke-width="1.2"/></g><g transform="translate(150.3 153)"><rect x="1" y="2" width="6" height="14" fill="#fff" stroke="#222" stroke-width="1.2"/><path d="M8 4 H12 L12 7" fill="none" stroke="#222" stroke-width="1"/><path d="M10 20 L21 10 L24 13 L13 23 Z" fill="#8a97e6" stroke="#333" stroke-width="1"/></g><g transform="translate(177.9 153)"><path d="M2 5 L10 1 L19 4 L19 15 L11 20 L2 16 Z" fill="#6f80dd" stroke="#2a3a90" stroke-width="1.2"/><path d="M2 5 L11 9 L19 4 M11 9 V20" fill="none" stroke="#a9b4f0" stroke-width="1"/><rect x="8" y="13" width="6" height="6" fill="#fff" stroke="#333" stroke-width="1"/><path d="M17 21 H22 V16 Z" fill="#6f6f72"/></g><g transform="translate(205.5 153)"><path d="M10 2 L6 6 L8 8 L3 12 L6 14 L2 18 H10 Z" fill="#fff" stroke="#333" stroke-width="1"/><path d="M12 2 L16 6 L14 8 L19 12 L16 14 L20 18 H12 Z" fill="#8a97e6" stroke="#333" stroke-width="1"/><path d="M11 0 V22" stroke="#111" stroke-width="1" stroke-dasharray="1.5 1"/></g><g transform="translate(233.1 153)"><path d="M13 1 L21 9 L13 17 L5 9 Z" fill="#7f8ee4" stroke="#2f3f9a" stroke-width="1"/><rect x="2" y="15" width="5" height="5" fill="#fff" stroke="#111" stroke-width="1.2"/></g><g transform="translate(260.7 153)"><circle cx="11" cy="11" r="7.5" fill="#6274d4" stroke="#2a3a90" stroke-width="1"/><path d="M6 9 Q11 6 15 10 M11 4 V18" stroke="#c9d0f5" stroke-width="1" fill="none"/><rect x="1" y="5" width="2.6" height="2.6" fill="#fff" stroke="#111" stroke-width="1"/><rect x="9" y="0" width="2.6" height="2.6" fill="#fff" stroke="#111" stroke-width="1"/><rect x="18" y="3" width="2.6" height="2.6" fill="#fff" stroke="#111" stroke-width="1"/><rect x="1" y="16" width="2.6" height="2.6" fill="#fff" stroke="#111" stroke-width="1"/><rect x="10" y="19" width="2.6" height="2.6" fill="#fff" stroke="#111" stroke-width="1"/><rect x="18" y="15" width="2.6" height="2.6" fill="#fff" stroke="#111" stroke-width="1"/></g><g transform="translate(288.3 153)"><path d="M9 3 L12 0 L15 3 L12 6 Z" fill="#fff" stroke="#222" stroke-width="1"/><path d="M1 20 L6 15 H21 L16 20 Z" fill="none" stroke="#222" stroke-width="1.2"/><rect x="11" y="11" width="5" height="5" fill="#8a97e6" stroke="#333" stroke-width="1"/></g><g transform="translate(315.9 153)"><rect x="1" y="1" width="5" height="5" fill="#fff" stroke="#111" stroke-width="1.2"/><path d="M12 6 L16 3 L19 7 L15 10 Z" fill="#8a97e6" stroke="#333" stroke-width="1"/><path d="M6 20 Q11 17 13 13" stroke="#ddd" stroke-width="1.5" fill="none"/></g><g transform="translate(343.5 153)"><rect x="2" y="1" width="4" height="4" fill="#fff" stroke="#111" stroke-width="1.1"/><rect x="0" y="9" width="4" height="4" fill="#fff" stroke="#111" stroke-width="1.1"/><path d="M2 13 Q4 19 10 19" fill="none" stroke="#222" stroke-width="1"/><path d="M7 21 L12 14 H22 L17 21 Z" fill="#fff" stroke="#222" stroke-width="1.1"/></g><g transform="translate(371.1 153)"><path d="M3 8 V20 H14" fill="none" stroke="#2a9a3a" stroke-width="1.2"/><path d="M3 20 H14" stroke="#d0242a" stroke-width="1.2"/><rect x="4" y="13" width="5" height="5" fill="#fff" stroke="#111" stroke-width="1.2"/><path d="M10 12 L15 6 H22 L17 12 Z" fill="#7f8ee4" stroke="#222" stroke-width="1"/><path d="M13 13 H20" stroke="#d0242a" stroke-width="1.2"/><path d="M16 2 H19 V5" stroke="#2a9a3a" fill="none" stroke-width="1.2"/></g><g transform="translate(398.7 153)"><rect x="1.0" y="1.0" width="4.5" height="4.5" fill="#8a97e6" stroke="#111" stroke-width="1.1"/><rect x="1.0" y="7.5" width="4.5" height="4.5" fill="#c5cbf2" stroke="#111" stroke-width="1.1"/><rect x="1.0" y="14.0" width="4.5" height="4.5" fill="#8a97e6" stroke="#111" stroke-width="1.1"/><rect x="7.5" y="1.0" width="4.5" height="4.5" fill="#c5cbf2" stroke="#111" stroke-width="1.1"/><rect x="7.5" y="7.5" width="4.5" height="4.5" fill="#8a97e6" stroke="#111" stroke-width="1.1"/><rect x="7.5" y="14.0" width="4.5" height="4.5" fill="#c5cbf2" stroke="#111" stroke-width="1.1"/><rect x="14.0" y="1.0" width="4.5" height="4.5" fill="#8a97e6" stroke="#111" stroke-width="1.1"/><rect x="14.0" y="7.5" width="4.5" height="4.5" fill="#c5cbf2" stroke="#111" stroke-width="1.1"/><rect x="14.0" y="14.0" width="4.5" height="4.5" fill="#8a97e6" stroke="#111" stroke-width="1.1"/><path d="M17 21 H22 V16 Z" fill="#6f6f72"/></g><g transform="translate(426.3 153)"><rect x="9" y="1" width="3" height="3" fill="#fff" stroke="#111" stroke-width="1"/><rect x="2" y="10" width="3" height="3" fill="#fff" stroke="#111" stroke-width="1"/><rect x="9" y="19" width="3" height="3" fill="#fff" stroke="#111" stroke-width="1"/><path d="M15 5 l2 -2 l2 2 l-2 2 Z" fill="#8a97e6" stroke="#222" stroke-width="0.8"/><path d="M3 5 l2 -2 l2 2 l-2 2 Z" fill="#8a97e6" stroke="#222" stroke-width="0.8"/><path d="M15 16 l2 -2 l2 2 l-2 2 Z" fill="#8a97e6" stroke="#222" stroke-width="0.8"/><rect x="18" y="10" width="3" height="3" fill="#fff" stroke="#111" stroke-width="1"/><circle cx="11" cy="11.5" r="0.9" fill="#111"/></g><g transform="translate(453.9 153)"><path d="M3 7 L8 2 H18 L13 7 Z" fill="#fff" stroke="#222" stroke-width="1.1"/><path d="M5 17 L10 12 H20 L15 17 Z" fill="#7f8ee4" stroke="#222" stroke-width="1.1"/><path d="M8 11 H12 V14" stroke="#2a9a3a" fill="none" stroke-width="1"/><path d="M1 20 H20" stroke="#d0242a" stroke-width="1.2"/></g><g transform="translate(481.5 153)"><circle cx="3" cy="3" r="2.3" fill="#fff" stroke="#222" stroke-width="1"/><path d="M5 3 H13" stroke="#222" stroke-width="1"/><path d="M12 1 L15 3 L12 5 Z" fill="#111"/><circle cx="18" cy="3" r="2.5" fill="#7b86c8" stroke="#222" stroke-width="1"/><circle cx="3" cy="11" r="2.3" fill="#fff" stroke="#222" stroke-width="1"/><path d="M5 11 H13" stroke="#222" stroke-width="1"/><path d="M12 9 L15 11 L12 13 Z" fill="#111"/><circle cx="18" cy="11" r="2.5" fill="#7b86c8" stroke="#222" stroke-width="1"/><circle cx="3" cy="19" r="2.3" fill="#fff" stroke="#222" stroke-width="1"/><path d="M5 19 H13" stroke="#222" stroke-width="1"/><path d="M12 17 L15 19 L12 21 Z" fill="#111"/><circle cx="18" cy="19" r="2.5" fill="#7b86c8" stroke="#222" stroke-width="1"/></g><g transform="translate(509.1 153)"><path d="M11 0 V22" stroke="#cc2020" stroke-width="1" stroke-dasharray="2 1"/><rect x="6" y="2" width="9" height="9" fill="#fff" stroke="#111" stroke-width="1.2"/><rect x="6" y="2" width="9" height="5" fill="#f4dede" stroke="#111" stroke-width="1.1"/><rect x="6" y="8" width="9" height="5" fill="#f4dede" stroke="#111" stroke-width="1.1"/><rect x="6" y="14" width="9" height="5" fill="#f4dede" stroke="#111" stroke-width="1.1"/><path d="M17 21 H22 V16 Z" fill="#6f6f72"/></g><g transform="translate(536.7 153)"><rect x="1" y="1" width="5" height="20" fill="#f3f3f3" stroke="#111" stroke-width="1.1"/><path d="M9 1 H20 L15 11 L20 21 H9 L14 11 Z" fill="#8a97e6" stroke="#222" stroke-width="1.1"/></g><g transform="translate(564.3 153)"><rect x="1" y="1" width="5" height="20" fill="#fff" stroke="#111" stroke-width="1.1"/><path d="M3 21 Q3 9 17 7 L19 11 Q8 12 8 21 Z" fill="#8a97e6" stroke="#333" stroke-width="1"/></g><g transform="translate(591.9 153)"><rect x="1" y="1" width="13" height="20" fill="#fff" stroke="#111" stroke-width="1.4"/><path d="M6 2 H9 L13 20 H2 Z" fill="#8a97e6" stroke="#222" stroke-width="1"/></g><g transform="translate(619.5 153)"><path d="M1 2 H5 V21 H1 Z" fill="#fff" stroke="#777" stroke-width="0.8"/><path d="M5 20 L11 9 L12 2 H17 Q16 10 9 21 Z" fill="#7e8de2" stroke="#333" stroke-width="1"/></g><g transform="translate(647.1 153)"><path d="M1 2 H5 V21 H1 Z" fill="#fff" stroke="#777" stroke-width="0.8"/><path d="M3 21 L11 2 H17 L9 21 Z" fill="#8a97e6" stroke="#333" stroke-width="1"/></g><g transform="translate(674.7 153)"><path d="M1 8 L7 3 L12 7 L18 2 L20 4 L12 10 L7 6 L2 10 Z" fill="#fff" stroke="#333" stroke-width="1"/><path d="M1 17 Q5 12 9 15 Q13 18 19 13 L20 16 Q13 21 9 18 Q5 15 2 20 Z" fill="#7e8de2" stroke="#555" stroke-width="0.8"/></g><g transform="translate(702.3 153)"><path d="M1 5 L6 2 L8 14 L3 19 Z" fill="#eee" stroke="#111" stroke-width="1.1"/><path d="M8 4 L10 1 L19 4 L16 20 L11 21 L8 14 Z" fill="#7584de" stroke="#111" stroke-width="1.1"/><path d="M17 21 H22 V16 Z" fill="#6f6f72"/></g><g transform="translate(729.9 153)"><path d="M4 9 Q6 4 15 3 Q20 4 19 10 Q17 16 9 17 Q4 16 4 9 Z" fill="#6b7cd8" stroke="#222" stroke-width="1"/><ellipse cx="7" cy="12" rx="2.5" ry="4" fill="#5a6bc8" stroke="#222" stroke-width="0.8"/><rect x="1" y="2" width="20" height="18" fill="none" stroke="#666" stroke-dasharray="1 1" stroke-width="0.6"/><rect x="0" y="5" width="2.4" height="2.4" fill="#fff" stroke="#111" stroke-width="1"/><rect x="11" y="0" width="2.4" height="2.4" fill="#fff" stroke="#111" stroke-width="1"/><rect x="20" y="5" width="2.4" height="2.4" fill="#fff" stroke="#111" stroke-width="1"/><rect x="0" y="15" width="2.4" height="2.4" fill="#fff" stroke="#111" stroke-width="1"/><rect x="11" y="20" width="2.4" height="2.4" fill="#fff" stroke="#111" stroke-width="1"/><rect x="20" y="15" width="2.4" height="2.4" fill="#fff" stroke="#111" stroke-width="1"/><path d="M17 21 H22 V16 Z" fill="#6f6f72"/></g><g transform="translate(757.5 153)"><path d="M2 8 H11 V4 L19 11 L11 18 V14 H2 Z" fill="#d81a1a" stroke="#9a1010" stroke-width="0.8"/><path d="M17 21 H22 V16 Z" fill="#6f6f72"/></g></svg>
<!-- right panel -->
<div class="a" style="left:1646px;top:188px;width:300px;height:880px;background:#ebecf0"></div>
<div class="a" style="left:1649px;top:191px;width:294px;height:1px;background:#cfd0d6"></div>
<div class="a" style="left:1647px;top:219px;width:299px;height:32px;background:#f4f5f7"></div>
<div class="a" style="left:1647px;top:250px;width:299px;height:1px;background:#d0d0d4"></div>
<div class="a" style="left:1647px;top:251px;width:299px;height:796px;background:#ffffff"></div>
<div class="a" style="left:1647px;top:1047px;width:299px;height:20px;background:#f0f0f0"></div>
<div class="a" style="left:1646px;top:1067px;width:300px;height:1px;background:#cfd0d6"></div>
<div class="a" style="left:1646px;top:219px;width:1px;height:849px;background:#cfd0d6"></div>
<div class="a" style="left:1667px;top:1054px;width:155px;height:6px;background:#858585"></div>
<div class="a" style="left:1647px;top:561px;width:296px;height:23px;background:#0b78d6"></div>
<svg style="left:0;top:0" width="2000" height="1125"><path d="M1647 219 V200 Q1647 197 1650 197 H1677 L1691 219 Z" fill="#d8d8db" stroke="#e8e8ec" stroke-width="0.8"/><path d="M1737 219 V200 Q1737 197 1740 197 H1767 L1781 219 Z" fill="#d8d8db" stroke="#e8e8ec" stroke-width="0.8"/><path d="M1783 219 V200 Q1783 197 1786 197 H1813 L1827 219 Z" fill="#d8d8db" stroke="#e8e8ec" stroke-width="0.8"/><path d="M1828 219 V200 Q1828 197 1831 197 H1859 L1873 219 Z" fill="#d8d8db" stroke="#e8e8ec" stroke-width="0.8"/><path d="M1875 219 V200 Q1875 197 1878 197 H1904 L1918 219 Z" fill="#d8d8db" stroke="#e8e8ec" stroke-width="0.8"/><path d="M1692 220 V200 Q1692 197 1695 197 H1722 L1738 220 Z" fill="#f2f2f5" stroke="#d4d5da" stroke-width="0.8"/><rect x="1647" y="219" width="299" height="1" fill="#d9dade"/><path d="M1660.5 209.5 L1668.50 209.50 A8 8 0 0 1 1666.16 215.16 Z" fill="#ff2020"/><path d="M1660.5 209.5 L1666.16 215.16 A8 8 0 0 1 1660.50 217.50 Z" fill="#ffb000"/><path d="M1660.5 209.5 L1660.50 217.50 A8 8 0 0 1 1654.84 215.16 Z" fill="#f0f000"/><path d="M1660.5 209.5 L1654.84 215.16 A8 8 0 0 1 1652.50 209.50 Z" fill="#20d020"/><path d="M1660.5 209.5 L1652.50 209.50 A8 8 0 0 1 1654.84 203.84 Z" fill="#00c0ff"/><path d="M1660.5 209.5 L1654.84 203.84 A8 8 0 0 1 1660.50 201.50 Z" fill="#2040ff"/><path d="M1660.5 209.5 L1660.50 201.50 A8 8 0 0 1 1666.16 203.84 Z" fill="#b020ff"/><path d="M1660.5 209.5 L1666.16 203.84 A8 8 0 0 1 1668.50 209.50 Z" fill="#ff20b0"/><circle cx="1660.5" cy="209.5" r="3.8" fill="#fff"/><circle cx="1660.5" cy="209.5" r="8" fill="none" stroke="#555" stroke-width="0.6"/><path d="M1696 205 L1702 201 L1715 204 L1713 216 L1705 219 L1697 213 Z" fill="#2a3a8a"/><path d="M1696 204 L1702 200 L1715 203 L1709 209 Z" fill="#f07840" stroke="#333" stroke-width="0.7"/><path d="M1697 207 L1709 211 L1714 206 L1713 210 L1705 215 L1697 210 Z" fill="#fff"/><path d="M1697 211 L1705 216 L1713 212 L1712 215 L1705 219 L1698 214Z" fill="#3050c0"/><circle cx="1749" cy="211" r="7" fill="#3d5ad0" stroke="#1b2a7a" stroke-width="0.8"/><circle cx="1747" cy="208" r="3" fill="#a8b8f0"/><path d="M1754 205 L1759 201 M1756 201 H1759 V204" stroke="#222" stroke-width="1.3" fill="none"/><path d="M1790 215 L1798 205 L1802 208 L1794 217 Z" fill="#fff" stroke="#333" stroke-width="0.8"/><path d="M1797 205 L1803 199 L1806 202 L1801 208 Z" fill="#e06030" stroke="#333" stroke-width="0.8"/><path d="M1834 204 H1840 L1842 206 H1850 V216 H1834 Z" fill="#d9a520" stroke="#6a5010" stroke-width="0.8"/><path d="M1836 209 H1852 L1849 217 H1833 Z" fill="#f6d050" stroke="#6a5010" stroke-width="0.8"/><rect x="1880" y="201" width="18" height="17" fill="#3a5cc8" stroke="#222" stroke-width="1"/><rect x="1880" y="201" width="18" height="3" fill="#dde"/><ellipse cx="1889" cy="211" rx="6" ry="4" fill="#90a8f0"/><text x="1886" y="215" font-family="Liberation Sans" font-size="8" font-weight="bold" fill="#fff">?</text><g transform="translate(1936 209)" fill="#9a9a9a"><circle r="5.5"/><g stroke="#9a9a9a" stroke-width="2.6"><path d="M0 0 L7.80 0.00"/><path d="M0 0 L5.52 5.52"/><path d="M0 0 L0.00 7.80"/><path d="M0 0 L-5.52 5.52"/><path d="M0 0 L-7.80 0.00"/><path d="M0 0 L-5.52 -5.52"/><path d="M0 0 L-0.00 -7.80"/><path d="M0 0 L5.52 -5.52"/></g><circle r="2.4" fill="#ebecf0"/></g><path d="M1655 227 H1663 L1667 231 V244 H1655 Z" fill="#f4f4f4" stroke="#222" stroke-width="1.1"/><path d="M1680 227 H1687 L1690 230 V239 H1680 Z" fill="#f4f4f4" stroke="#222" stroke-width="1"/><path d="M1685 232 H1692 L1696 236 V245 H1685 Z" fill="#f4f4f4" stroke="#222" stroke-width="1"/><path d="M1708 228 L1724 243 M1724 228 L1708 243" stroke="#d81818" stroke-width="2.6"/><path d="M1735 242 L1743 229 L1752 242 Z" fill="#7a8ee8" stroke="#2a3a9a" stroke-width="1.1"/><path d="M1763 229 H1780 L1771 241 Z" fill="#b8b8b8" stroke="#9a9a9a" stroke-width="1"/><path d="M1804 227 V245 L1793 236 Z" fill="#b0b0b0" stroke="#999" stroke-width="1"/><path d="M1817 228 H1836 L1829 237 V244 L1825 242 V237 Z" fill="#3a5cd0" stroke="#1b2a7a" stroke-width="1"/><path d="M1834 245 H1838 V241 Z" fill="#111"/><path d="M1847 227 H1858 L1862 231 V245 H1847 Z" fill="#d2d2d2" stroke="#aaa" stroke-width="1"/><path d="M1873 243 L1882 233" stroke="#1b2a6a" stroke-width="3"/><path d="M1878 231 L1884 227 L1890 232 L1886 236 Z" fill="#2a3a7a" stroke="#111" stroke-width="0.8"/><path d="M1889 245 H1893 V241 Z" fill="#111"/><circle cx="1909" cy="235.5" r="8.5" fill="#2f55c8" stroke="#1b2a7a" stroke-width="0.8"/><text x="1905" y="240.5" font-family="Liberation Sans" font-size="12" font-weight="bold" fill="#fff">?</text><rect x="1647" y="250" width="299" height="1" fill="#cfd0d4"/><rect x="1793" y="252" width="1" height="24" fill="#e4e4e6"/><rect x="1813.5" y="252" width="1" height="24" fill="#e4e4e6"/><rect x="1835" y="252" width="1" height="24" fill="#e4e4e6"/><rect x="1855.5" y="252" width="1" height="24" fill="#e4e4e6"/><rect x="1875.5" y="252" width="1" height="24" fill="#e4e4e6"/><rect x="1647" y="299.3" width="299" height="1" fill="#f4f4f6"/><path d="M1820.5 291.5 Q1817.5 288.0 1817.5 285.0 A5.5 5.5 0 0 1 1828.5 285.0 Q1828.5 288.0 1825.5 291.5 L1825 294.5 H1821 Z" fill="#f4e27a" stroke="#8a7a30" stroke-width="0.9"/><path d="M1821 293.0 H1825" stroke="#8a7a30" stroke-width="0.8"/><rect x="1838.5" y="286.0" width="10" height="8" fill="#f4e066" stroke="#6a5a20" stroke-width="0.9"/><path d="M1845 286.0 V282.5 Q1845 280.0 1848 280.0 Q1851 280.0 1851 282.5 V285.0" fill="none" stroke="#333" stroke-width="1"/><rect x="1859.5" y="281.5" width="13" height="13" fill="#0a7a10" stroke="#111" stroke-width="1"/><circle cx="1888" cy="288.0" r="7.5" fill="#fbfbfb" stroke="#efefef" stroke-width="1"/><rect x="1647" y="323.0" width="299" height="1" fill="#f4f4f6"/><path d="M1820.5 315.2 Q1817.5 311.7 1817.5 308.7 A5.5 5.5 0 0 1 1828.5 308.7 Q1828.5 311.7 1825.5 315.2 L1825 318.2 H1821 Z" fill="#f4e27a" stroke="#8a7a30" stroke-width="0.9"/><path d="M1821 316.7 H1825" stroke="#8a7a30" stroke-width="0.8"/><rect x="1838.5" y="309.7" width="10" height="8" fill="#f4e066" stroke="#6a5a20" stroke-width="0.9"/><path d="M1845 309.7 V306.2 Q1845 303.7 1848 303.7 Q1851 303.7 1851 306.2 V308.7" fill="none" stroke="#333" stroke-width="1"/><rect x="1859.5" y="305.2" width="13" height="13" fill="#ffffff" stroke="#111" stroke-width="1"/><circle cx="1888" cy="311.7" r="7.5" fill="#fbfbfb" stroke="#efefef" stroke-width="1"/><rect x="1647" y="346.6" width="299" height="1" fill="#f4f4f6"/><path d="M1820.5 338.8 Q1817.5 335.3 1817.5 332.3 A5.5 5.5 0 0 1 1828.5 332.3 Q1828.5 335.3 1825.5 338.8 L1825 341.8 H1821 Z" fill="#6f9ae6" stroke="#3a5a9a" stroke-width="0.9"/><path d="M1821 340.3 H1825" stroke="#3a5a9a" stroke-width="0.8"/><rect x="1838.5" y="333.3" width="10" height="8" fill="#f4e066" stroke="#6a5a20" stroke-width="0.9"/><path d="M1845 333.3 V329.8 Q1845 327.3 1848 327.3 Q1851 327.3 1851 329.8 V332.3" fill="none" stroke="#333" stroke-width="1"/><rect x="1859.5" y="328.8" width="13" height="13" fill="#0a14f0" stroke="#111" stroke-width="1"/><circle cx="1888" cy="335.3" r="7.5" fill="#fbfbfb" stroke="#efefef" stroke-width="1"/><rect x="1647" y="370.3" width="299" height="1" fill="#f4f4f6"/><path d="M1820.5 362.5 Q1817.5 359.0 1817.5 356.0 A5.5 5.5 0 0 1 1828.5 356.0 Q1828.5 359.0 1825.5 362.5 L1825 365.5 H1821 Z" fill="#6f9ae6" stroke="#3a5a9a" stroke-width="0.9"/><path d="M1821 364.0 H1825" stroke="#3a5a9a" stroke-width="0.8"/><rect x="1838.5" y="357.0" width="10" height="8" fill="#f4e066" stroke="#6a5a20" stroke-width="0.9"/><path d="M1845 357.0 V353.5 Q1845 351.0 1848 351.0 Q1851 351.0 1851 353.5 V356.0" fill="none" stroke="#333" stroke-width="1"/><rect x="1859.5" y="352.5" width="13" height="13" fill="#8a10f0" stroke="#111" stroke-width="1"/><circle cx="1888" cy="359.0" r="7.5" fill="#fbfbfb" stroke="#efefef" stroke-width="1"/><rect x="1647" y="394.0" width="299" height="1" fill="#f4f4f6"/><path d="M1820.5 386.2 Q1817.5 382.7 1817.5 379.7 A5.5 5.5 0 0 1 1828.5 379.7 Q1828.5 382.7 1825.5 386.2 L1825 389.2 H1821 Z" fill="#6f9ae6" stroke="#3a5a9a" stroke-width="0.9"/><path d="M1821 387.7 H1825" stroke="#3a5a9a" stroke-width="0.8"/><rect x="1838.5" y="380.7" width="10" height="8" fill="#f4e066" stroke="#6a5a20" stroke-width="0.9"/><path d="M1845 380.7 V377.2 Q1845 374.7 1848 374.7 Q1851 374.7 1851 377.2 V379.7" fill="none" stroke="#333" stroke-width="1"/><rect x="1859.5" y="376.2" width="13" height="13" fill="#f01010" stroke="#111" stroke-width="1"/><circle cx="1888" cy="382.7" r="7.5" fill="#fbfbfb" stroke="#efefef" stroke-width="1"/><rect x="1647" y="417.7" width="299" height="1" fill="#f4f4f6"/><path d="M1820.5 409.9 Q1817.5 406.4 1817.5 403.4 A5.5 5.5 0 0 1 1828.5 403.4 Q1828.5 406.4 1825.5 409.9 L1825 412.9 H1821 Z" fill="#6f9ae6" stroke="#3a5a9a" stroke-width="0.9"/><path d="M1821 411.4 H1825" stroke="#3a5a9a" stroke-width="0.8"/><rect x="1838.5" y="404.4" width="10" height="8" fill="#f4e066" stroke="#6a5a20" stroke-width="0.9"/><path d="M1845 404.4 V400.9 Q1845 398.4 1848 398.4 Q1851 398.4 1851 400.9 V403.4" fill="none" stroke="#333" stroke-width="1"/><rect x="1859.5" y="399.9" width="13" height="13" fill="#18c818" stroke="#111" stroke-width="1"/><circle cx="1888" cy="406.4" r="7.5" fill="#fbfbfb" stroke="#efefef" stroke-width="1"/><rect x="1647" y="441.3" width="299" height="1" fill="#f4f4f6"/><path d="M1820.5 433.5 Q1817.5 430.0 1817.5 427.0 A5.5 5.5 0 0 1 1828.5 427.0 Q1828.5 430.0 1825.5 433.5 L1825 436.5 H1821 Z" fill="#6f9ae6" stroke="#3a5a9a" stroke-width="0.9"/><path d="M1821 435.0 H1825" stroke="#3a5a9a" stroke-width="0.8"/><rect x="1838.5" y="428.0" width="10" height="8" fill="#f4e066" stroke="#6a5a20" stroke-width="0.9"/><path d="M1845 428.0 V424.5 Q1845 422.0 1848 422.0 Q1851 422.0 1851 424.5 V427.0" fill="none" stroke="#333" stroke-width="1"/><rect x="1859.5" y="423.5" width="13" height="13" fill="#000000" stroke="#111" stroke-width="1"/><circle cx="1888" cy="430.0" r="7.5" fill="#fbfbfb" stroke="#efefef" stroke-width="1"/><rect x="1647" y="465.0" width="299" height="1" fill="#f4f4f6"/><path d="M1820.5 457.2 Q1817.5 453.7 1817.5 450.7 A5.5 5.5 0 0 1 1828.5 450.7 Q1828.5 453.7 1825.5 457.2 L1825 460.2 H1821 Z" fill="#f4e27a" stroke="#8a7a30" stroke-width="0.9"/><path d="M1821 458.7 H1825" stroke="#8a7a30" stroke-width="0.8"/><rect x="1838.5" y="451.7" width="10" height="8" fill="#f4e066" stroke="#6a5a20" stroke-width="0.9"/><path d="M1845 451.7 V448.2 Q1845 445.7 1848 445.7 Q1851 445.7 1851 448.2 V450.7" fill="none" stroke="#333" stroke-width="1"/><rect x="1859.5" y="447.2" width="13" height="13" fill="#b86010" stroke="#111" stroke-width="1"/><circle cx="1888" cy="453.7" r="7.5" fill="#fbfbfb" stroke="#efefef" stroke-width="1"/><rect x="1647" y="488.7" width="299" height="1" fill="#f4f4f6"/><path d="M1820.5 480.9 Q1817.5 477.4 1817.5 474.4 A5.5 5.5 0 0 1 1828.5 474.4 Q1828.5 477.4 1825.5 480.9 L1825 483.9 H1821 Z" fill="#f4e27a" stroke="#8a7a30" stroke-width="0.9"/><path d="M1821 482.4 H1825" stroke="#8a7a30" stroke-width="0.8"/><rect x="1838.5" y="475.4" width="10" height="8" fill="#f4e066" stroke="#6a5a20" stroke-width="0.9"/><path d="M1845 475.4 V471.9 Q1845 469.4 1848 469.4 Q1851 469.4 1851 471.9 V474.4" fill="none" stroke="#333" stroke-width="1"/><rect x="1859.5" y="470.9" width="13" height="13" fill="#0a14f0" stroke="#111" stroke-width="1"/><circle cx="1888" cy="477.4" r="7.5" fill="#fbfbfb" stroke="#efefef" stroke-width="1"/><rect x="1647" y="512.3" width="299" height="1" fill="#f4f4f6"/><path d="M1820.5 504.5 Q1817.5 501.0 1817.5 498.0 A5.5 5.5 0 0 1 1828.5 498.0 Q1828.5 501.0 1825.5 504.5 L1825 507.5 H1821 Z" fill="#f4e27a" stroke="#8a7a30" stroke-width="0.9"/><path d="M1821 506.0 H1825" stroke="#8a7a30" stroke-width="0.8"/><rect x="1838.5" y="499.0" width="10" height="8" fill="#f4e066" stroke="#6a5a20" stroke-width="0.9"/><path d="M1845 499.0 V495.5 Q1845 493.0 1848 493.0 Q1851 493.0 1851 495.5 V498.0" fill="none" stroke="#333" stroke-width="1"/><rect x="1859.5" y="494.5" width="13" height="13" fill="#f01010" stroke="#111" stroke-width="1"/><circle cx="1888" cy="501.0" r="7.5" fill="#fbfbfb" stroke="#efefef" stroke-width="1"/><rect x="1647" y="536.0" width="299" height="1" fill="#f4f4f6"/><path d="M1820.5 528.2 Q1817.5 524.7 1817.5 521.7 A5.5 5.5 0 0 1 1828.5 521.7 Q1828.5 524.7 1825.5 528.2 L1825 531.2 H1821 Z" fill="#f4e27a" stroke="#8a7a30" stroke-width="0.9"/><path d="M1821 529.7 H1825" stroke="#8a7a30" stroke-width="0.8"/><rect x="1838.5" y="522.7" width="10" height="8" fill="#f4e066" stroke="#6a5a20" stroke-width="0.9"/><path d="M1845 522.7 V519.2 Q1845 516.7 1848 516.7 Q1851 516.7 1851 519.2 V521.7" fill="none" stroke="#333" stroke-width="1"/><rect x="1859.5" y="518.2" width="13" height="13" fill="#000000" stroke="#111" stroke-width="1"/><circle cx="1888" cy="524.7" r="7.5" fill="#fbfbfb" stroke="#efefef" stroke-width="1"/><rect x="1647" y="559.7" width="299" height="1" fill="#f4f4f6"/><path d="M1820.5 551.9 Q1817.5 548.4 1817.5 545.4 A5.5 5.5 0 0 1 1828.5 545.4 Q1828.5 548.4 1825.5 551.9 L1825 554.9 H1821 Z" fill="#f4e27a" stroke="#8a7a30" stroke-width="0.9"/><path d="M1821 553.4 H1825" stroke="#8a7a30" stroke-width="0.8"/><rect x="1838.5" y="546.4" width="10" height="8" fill="#f4e066" stroke="#6a5a20" stroke-width="0.9"/><path d="M1845 546.4 V542.9 Q1845 540.4 1848 540.4 Q1851 540.4 1851 542.9 V545.4" fill="none" stroke="#333" stroke-width="1"/><rect x="1859.5" y="541.9" width="13" height="13" fill="#000000" stroke="#111" stroke-width="1"/><circle cx="1888" cy="548.4" r="7.5" fill="#fbfbfb" stroke="#efefef" stroke-width="1"/><path d="M1796 572.04 L1801 577.04 L1811 566.04" fill="none" stroke="#1a1a2a" stroke-width="1.6"/><rect x="1859.5" y="565.5" width="13" height="13" fill="#000" stroke="#fff" stroke-width="1.2"/><circle cx="1888" cy="572.0" r="8" fill="#fff"/></svg>
<!-- viewport tabs -->
<svg style="left:0;top:0" width="2000" height="1125"><rect x="126" y="1043" width="1512" height="1" fill="#c8cad0"/><path d="M174 1044 L184 1068 H266 V1044 Z" fill="#dadadd" stroke="#d0d1d5" stroke-width="0.8"/><path d="M270 1044 L280 1068 H321 V1044 Z" fill="#dadadd" stroke="#d0d1d5" stroke-width="0.8"/><path d="M324 1044 L334 1068 H378 V1044 Z" fill="#dadadd" stroke="#d0d1d5" stroke-width="0.8"/><path d="M382 1044 L392 1068 H414 V1044 Z" fill="#dadadd" stroke="#d0d1d5" stroke-width="0.8"/><path d="M126 1044 L136 1069 H171 V1044 Z" fill="#f3f3f5" stroke="#c9cacf" stroke-width="1"/><path d="M393.5 1057 H404.5 M399 1051.5 V1062.5" stroke="#505050" stroke-width="2.6"/><path d="M394.5 1057 H403.5 M399 1052.5 V1061.5" stroke="#e8e8ea" stroke-width="1"/></svg>
<!-- osnap -->
<div class="a" style="left:60px;top:1078px;width:1px;height:22px;background:#cfd0d6"></div>
<svg style="left:0;top:0" width="2000" height="1125"><rect x="67.5" y="1082.5" width="15" height="15" rx="3" fill="#1a6fcf" stroke="#1660b8" stroke-width="1"/><path d="M71.2 1090.2 L73.8 1092.8 L78.6 1087.2" fill="none" stroke="#ffffff" stroke-width="1.3"/><rect x="120.5" y="1082.5" width="15" height="15" rx="3" fill="#1a6fcf" stroke="#1660b8" stroke-width="1"/><path d="M124.2 1090.2 L126.8 1092.8 L131.6 1087.2" fill="none" stroke="#ffffff" stroke-width="1.3"/><rect x="179.5" y="1082.5" width="15" height="15" rx="3" fill="#1a6fcf" stroke="#1660b8" stroke-width="1"/><path d="M183.2 1090.2 L185.8 1092.8 L190.6 1087.2" fill="none" stroke="#ffffff" stroke-width="1.3"/><rect x="240.5" y="1082.5" width="15" height="15" rx="3" fill="#1a6fcf" stroke="#1660b8" stroke-width="1"/><path d="M244.2 1090.2 L246.8 1092.8 L251.6 1087.2" fill="none" stroke="#ffffff" stroke-width="1.3"/><rect x="293.5" y="1082.5" width="15" height="15" rx="3" fill="#ffffff" stroke="#5c5c5c" stroke-width="1"/><rect x="345.5" y="1082.5" width="15" height="15" rx="3" fill="#1a6fcf" stroke="#1660b8" stroke-width="1"/><path d="M349.2 1090.2 L351.8 1092.8 L356.6 1087.2" fill="none" stroke="#ffffff" stroke-width="1.3"/><rect x="390.5" y="1082.5" width="15" height="15" rx="3" fill="#1a6fcf" stroke="#1660b8" stroke-width="1"/><path d="M394.2 1090.2 L396.8 1092.8 L401.6 1087.2" fill="none" stroke="#ffffff" stroke-width="1.3"/><rect x="447.5" y="1082.5" width="15" height="15" rx="3" fill="#1a6fcf" stroke="#1660b8" stroke-width="1"/><path d="M451.2 1090.2 L453.8 1092.8 L458.6 1087.2" fill="none" stroke="#ffffff" stroke-width="1.3"/><rect x="498.5" y="1082.5" width="15" height="15" rx="3" fill="#1a6fcf" stroke="#1660b8" stroke-width="1"/><path d="M502.2 1090.2 L504.8 1092.8 L509.6 1087.2" fill="none" stroke="#ffffff" stroke-width="1.3"/><rect x="561.5" y="1082.5" width="15" height="15" rx="3" fill="#1a6fcf" stroke="#1660b8" stroke-width="1"/><path d="M565.2 1090.2 L567.8 1092.8 L572.6 1087.2" fill="none" stroke="#ffffff" stroke-width="1.3"/><rect x="619.5" y="1082.5" width="15" height="15" rx="3" fill="#1a6fcf" stroke="#1660b8" stroke-width="1"/><path d="M623.2 1090.2 L625.8 1092.8 L630.6 1087.2" fill="none" stroke="#ffffff" stroke-width="1.3"/><rect x="690.5" y="1083.5" width="13" height="14" rx="3" fill="#fbfbfc" stroke="#e0e0e4" stroke-width="1"/><rect x="774.5" y="1083.5" width="13" height="14" rx="3" fill="#fbfbfc" stroke="#e0e0e4" stroke-width="1"/></svg>
<!-- status -->
<div class="a" style="left:54px;top:1103px;width:1892px;height:1px;background:#c9cacf"></div>
<div class="a" style="left:54px;top:1104px;width:1892px;height:21px;background:#f0f1f4"></div>
<svg style="left:0;top:0" width="2000" height="1125"><rect x="935" y="1103" width="215" height="22" fill="#e6eef8"/><rect x="114" y="1103" width="1" height="22" fill="#cfd0d5"/><rect x="220" y="1103" width="1" height="22" fill="#cfd0d5"/><rect x="327" y="1103" width="1" height="22" fill="#cfd0d5"/><rect x="433" y="1103" width="1" height="22" fill="#cfd0d5"/><rect x="540" y="1103" width="1" height="22" fill="#cfd0d5"/><rect x="745.5" y="1103" width="1" height="22" fill="#cfd0d5"/><rect x="826" y="1103" width="1" height="22" fill="#cfd0d5"/><rect x="878.5" y="1103" width="1" height="22" fill="#cfd0d5"/><rect x="935" y="1103" width="1" height="22" fill="#cfd0d5"/><rect x="990.5" y="1103" width="1" height="22" fill="#cfd0d5"/><rect x="1079" y="1103" width="1" height="22" fill="#cfd0d5"/><rect x="1150" y="1103" width="1" height="22" fill="#cfd0d5"/><rect x="1262" y="1103" width="1" height="22" fill="#cfd0d5"/><rect x="1311" y="1103" width="1" height="22" fill="#cfd0d5"/><rect x="1940" y="1103" width="1" height="22" fill="#cfd0d5"/><rect x="545" y="1108" width="13" height="13" fill="#000"/></svg>
<svg style="left:0;top:0" width="2000" height="1125">
<rect x="57" y="4" width="20" height="20" fill="#141414"/>
<path d="M60 22 C60 17 62 14 64 11 L66 6 L67 12 C69 15 71 17 74 17 L76 16 L75 21 C72 23 66 24 60 22 Z" fill="#e8e8e8"/>
<path d="M62 18 C64 17 66 19 68 19" stroke="#777" stroke-width="1" fill="none"/>
<text x="70" y="13" font-family="Liberation Sans" font-size="8" font-weight="bold" fill="#d0d0d0">6</text>
<path d="M1795 13.5 H1808" stroke="#555" stroke-width="1"/>
<rect x="1852.5" y="9.5" width="9" height="9" rx="1.5" fill="none" stroke="#555" stroke-width="1"/>
<path d="M1854.5 7.5 H1862 Q1864 7.5 1864 9.5 V16.5" fill="none" stroke="#555" stroke-width="1"/>
<path d="M1910 8 L1922 20 M1922 8 L1910 20" stroke="#444" stroke-width="1.1"/>
<rect x="1928.5" y="96.5" width="15" height="10" fill="#f4f4f4" stroke="#a8a8a8" stroke-width="1"/>
<rect x="1928.5" y="107.5" width="15" height="10" fill="#f4f4f4" stroke="#a8a8a8" stroke-width="1"/>
<path d="M1932 104 L1936 99 L1940 104 Z" fill="#111"/>
<path d="M1932 110 L1936 115 L1940 110 Z" fill="#111"/>
</svg>

<span class="t" style="left:82.4px;top:7.2px;font-size:15px;font-weight:normal;color:#7a7a7a;transform:scaleX(0.965);">TRY.3dm (5 MB) - Rhinoceros 6 Commercial - [Top]</span>
<span class="t" style="left:63.4px;top:35.4px;font-size:14px;font-weight:normal;color:#6e6e6e;transform:scaleX(1.073);">File</span>
<span class="t" style="left:104.4px;top:35.4px;font-size:14px;font-weight:normal;color:#6e6e6e;transform:scaleX(1.086);">Edit</span>
<span class="t" style="left:147.4px;top:35.4px;font-size:14px;font-weight:normal;color:#6e6e6e;transform:scaleX(1.103);">View</span>
<span class="t" style="left:196.4px;top:35.4px;font-size:14px;font-weight:normal;color:#6e6e6e;transform:scaleX(1.023);">Curve</span>
<span class="t" style="left:251.4px;top:35.4px;font-size:14px;font-weight:normal;color:#6e6e6e;transform:scaleX(1.020);">Surface</span>
<span class="t" style="left:317.4px;top:35.4px;font-size:14px;font-weight:normal;color:#6e6e6e;transform:scaleX(1.066);">Solid</span>
<span class="t" style="left:368.4px;top:35.4px;font-size:14px;font-weight:normal;color:#6e6e6e;transform:scaleX(1.057);">Mesh</span>
<span class="t" style="left:421.4px;top:35.4px;font-size:14px;font-weight:normal;color:#6e6e6e;transform:scaleX(1.061);">Dimension</span>
<span class="t" style="left:509.4px;top:35.4px;font-size:14px;font-weight:normal;color:#6e6e6e;transform:scaleX(1.030);">Transform</span>
<span class="t" style="left:591.4px;top:35.4px;font-size:14px;font-weight:normal;color:#6e6e6e;transform:scaleX(1.077);">Tools</span>
<span class="t" style="left:643.4px;top:35.4px;font-size:14px;font-weight:normal;color:#6e6e6e;transform:scaleX(1.048);">Analyze</span>
<span class="t" style="left:712.4px;top:35.4px;font-size:14px;font-weight:normal;color:#6e6e6e;transform:scaleX(1.028);">Render</span>
<span class="t" style="left:776.4px;top:35.4px;font-size:14px;font-weight:normal;color:#6e6e6e;transform:scaleX(0.986);">Panels</span>
<span class="t" style="left:834.4px;top:35.4px;font-size:14px;font-weight:normal;color:#6e6e6e;transform:scaleX(1.153);">Help</span>
<span class="t" style="left:64.4px;top:59.4px;font-size:14px;font-weight:normal;color:#202020;transform:scaleX(1.060);">Press Control to extrude, tap Alt to make a duplicate</span>
<span class="t" style="left:64.4px;top:78.4px;font-size:14px;font-weight:normal;color:#202020;transform:scaleX(1.060);">Press Control to extrude, tap Alt to make a duplicate</span>
<span class="t" style="left:64.4px;top:98.2px;font-size:15px;font-weight:bold;color:#000000;transform:scaleX(0.973);">Command:</span>
<span class="t" style="left:77.4px;top:132.4px;font-size:14px;font-weight:normal;color:#333333;transform:scaleX(1.059);">Standard</span>
<span class="t" style="left:166.4px;top:132.4px;font-size:14px;font-weight:normal;color:#333333;transform:scaleX(0.986);">CPlanes</span>
<span class="t" style="left:247.4px;top:132.4px;font-size:14px;font-weight:normal;color:#333333;transform:scaleX(1.040);">Set View</span>
<span class="t" style="left:333.4px;top:132.4px;font-size:14px;font-weight:normal;color:#333333;transform:scaleX(1.072);">Display</span>
<span class="t" style="left:410.4px;top:132.4px;font-size:14px;font-weight:normal;color:#333333;transform:scaleX(1.059);">Select</span>
<span class="t" style="left:478.4px;top:132.4px;font-size:14px;font-weight:normal;color:#333333;transform:scaleX(1.090);">Viewport Layout</span>
<span class="t" style="left:615.4px;top:132.4px;font-size:14px;font-weight:normal;color:#333333;transform:scaleX(1.137);">Visibility</span>
<span class="t" style="left:699.4px;top:132.4px;font-size:14px;font-weight:normal;color:#333333;transform:scaleX(1.062);">Transform</span>
<span class="t" style="left:794.4px;top:132.4px;font-size:14px;font-weight:normal;color:#333333;transform:scaleX(1.061);">Curve Tools</span>
<span class="t" style="left:898.4px;top:132.4px;font-size:14px;font-weight:normal;color:#333333;transform:scaleX(1.055);">Surface Tools</span>
<span class="t" style="left:1015.4px;top:132.4px;font-size:14px;font-weight:normal;color:#333333;transform:scaleX(1.100);">Solid Tools</span>
<span class="t" style="left:1115.4px;top:132.4px;font-size:14px;font-weight:normal;color:#333333;transform:scaleX(1.094);">Mesh Tools</span>
<span class="t" style="left:1218.4px;top:132.4px;font-size:14px;font-weight:normal;color:#333333;transform:scaleX(1.072);">Render Tools</span>
<span class="t" style="left:1333.4px;top:132.4px;font-size:14px;font-weight:normal;color:#333333;transform:scaleX(1.126);">Drafting</span>
<span class="t" style="left:1417.4px;top:132.4px;font-size:14px;font-weight:normal;color:#333333;transform:scaleX(1.069);">New in V6</span>
<span class="t" style="left:134.4px;top:191.2px;font-size:15px;font-weight:bold;color:#111111;transform:scaleX(0.993);">Top</span>
<span class="t" style="left:138.4px;top:1050.4px;font-size:14px;font-weight:normal;color:#303030;transform:scaleX(1.205);">Top</span>
<span class="t" style="left:185.4px;top:1050.4px;font-size:14px;font-weight:normal;color:#303030;transform:scaleX(1.014);">Perspective</span>
<span class="t" style="left:281.4px;top:1050.4px;font-size:14px;font-weight:normal;color:#303030;transform:scaleX(1.077);">Front</span>
<span class="t" style="left:335.4px;top:1050.4px;font-size:14px;font-weight:normal;color:#303030;transform:scaleX(1.107);">Right</span>
<span class="t" style="left:87.4px;top:1083.2px;font-size:15px;font-weight:normal;color:#333333;transform:scaleX(0.906);">End</span>
<span class="t" style="left:138.4px;top:1083.2px;font-size:15px;font-weight:normal;color:#333333;transform:scaleX(1.021);">Near</span>
<span class="t" style="left:197.4px;top:1083.2px;font-size:15px;font-weight:normal;color:#333333;transform:scaleX(1.000);">Point</span>
<span class="t" style="left:259.4px;top:1083.2px;font-size:15px;font-weight:normal;color:#333333;transform:scaleX(1.043);">Mid</span>
<span class="t" style="left:312.4px;top:1083.2px;font-size:15px;font-weight:normal;color:#333333;transform:scaleX(0.879);">Cen</span>
<span class="t" style="left:364.4px;top:1083.2px;font-size:15px;font-weight:normal;color:#333333;transform:scaleX(1.031);">Int</span>
<span class="t" style="left:408.4px;top:1083.2px;font-size:15px;font-weight:normal;color:#333333;transform:scaleX(0.921);">Perp</span>
<span class="t" style="left:467.4px;top:1083.2px;font-size:15px;font-weight:normal;color:#333333;transform:scaleX(0.876);">Tan</span>
<span class="t" style="left:517.4px;top:1083.2px;font-size:15px;font-weight:normal;color:#333333;transform:scaleX(0.959);">Quad</span>
<span class="t" style="left:580.4px;top:1083.2px;font-size:15px;font-weight:normal;color:#333333;transform:scaleX(1.011);">Knot</span>
<span class="t" style="left:638.4px;top:1083.2px;font-size:15px;font-weight:normal;color:#333333;transform:scaleX(0.992);">Vertex</span>
<span class="t" style="left:707.4px;top:1083.2px;font-size:15px;font-weight:normal;color:#333333;transform:scaleX(1.011);">Project</span>
<span class="t" style="left:791.4px;top:1083.2px;font-size:15px;font-weight:normal;color:#333333;transform:scaleX(0.983);">Disable</span>
<span class="t" style="left:61.4px;top:1109.4px;font-size:14px;font-weight:normal;color:#2a2a2a;transform:scaleX(1.006);">CPlane</span>
<span class="t" style="left:132.4px;top:1109.4px;font-size:14px;font-weight:normal;color:#2a2a2a;transform:scaleX(0.999);">x 14026.97</span>
<span class="t" style="left:247.4px;top:1109.4px;font-size:14px;font-weight:normal;color:#2a2a2a;transform:scaleX(1.010);">y 211.41</span>
<span class="t" style="left:376.4px;top:1109.4px;font-size:14px;font-weight:normal;color:#2a2a2a;transform:scaleX(1.171);">z</span>
<span class="t" style="left:450.4px;top:1109.4px;font-size:14px;font-weight:normal;color:#2a2a2a;transform:scaleX(1.109);">Millimeters</span>
<span class="t" style="left:560.4px;top:1109.4px;font-size:14px;font-weight:normal;color:#2a2a2a;transform:scaleX(0.925);">SURF 3 LAYER</span>
<span class="t" style="left:753.4px;top:1109.4px;font-size:14px;font-weight:normal;color:#2a2a2a;transform:scaleX(1.034);">Grid Snap</span>
<span class="t" style="left:832.4px;top:1109.4px;font-size:14px;font-weight:normal;color:#2a2a2a;transform:scaleX(1.120);">Ortho</span>
<span class="t" style="left:886.4px;top:1109.4px;font-size:14px;font-weight:normal;color:#2a2a2a;transform:scaleX(1.018);">Planar</span>
<span class="t" style="left:940.4px;top:1109.4px;font-size:14px;font-weight:bold;color:#2a2a2a;transform:scaleX(1.014);">Osnap</span>
<span class="t" style="left:995.4px;top:1109.4px;font-size:14px;font-weight:bold;color:#2a2a2a;transform:scaleX(1.038);">SmartTrack</span>
<span class="t" style="left:1085.4px;top:1109.4px;font-size:14px;font-weight:bold;color:#2a2a2a;transform:scaleX(1.057);">Gumball</span>
<span class="t" style="left:1158.4px;top:1109.4px;font-size:14px;font-weight:normal;color:#2a2a2a;transform:scaleX(1.050);">Record History</span>
<span class="t" style="left:1270.4px;top:1109.4px;font-size:14px;font-weight:normal;color:#2a2a2a;transform:scaleX(1.099);">Filter</span>
<span class="t" style="left:1312.4px;top:1109.4px;font-size:14px;font-weight:normal;color:#2a2a2a;transform:scaleX(0.946);">CPU use: 0.5 %</span>
<span class="t" style="left:1652.4px;top:258.4px;font-size:14px;font-weight:normal;color:#222222;transform:scaleX(1.076);">Name</span>
<span class="t" style="left:1881.4px;top:258.4px;font-size:14px;font-weight:normal;color:#222222;transform:scaleX(1.109);">Material</span>
<span class="t" style="left:1655.4px;top:281.8px;font-size:14.5px;font-weight:normal;color:#1e1e1e;transform:scaleX(0.857);">TOP REFERENCE</span>
<span class="t" style="left:1655.4px;top:305.5px;font-size:14.5px;font-weight:normal;color:#1e1e1e;transform:scaleX(0.910);">BASE</span>
<span class="t" style="left:1655.4px;top:329.1px;font-size:14.5px;font-weight:normal;color:#1e1e1e;transform:scaleX(0.887);">FEMALE PART</span>
<span class="t" style="left:1655.4px;top:352.8px;font-size:14.5px;font-weight:normal;color:#1e1e1e;transform:scaleX(0.899);">MALE PART_1</span>
<span class="t" style="left:1655.4px;top:376.5px;font-size:14.5px;font-weight:normal;color:#1e1e1e;transform:scaleX(0.909);">MALE PART_2</span>
<span class="t" style="left:1655.4px;top:400.1px;font-size:14.5px;font-weight:normal;color:#1e1e1e;transform:scaleX(0.883);">STRAPS</span>
<span class="t" style="left:1655.4px;top:423.8px;font-size:14.5px;font-weight:normal;color:#1e1e1e;transform:scaleX(0.899);">LASER CUT</span>
<span class="t" style="left:1655.4px;top:447.5px;font-size:14.5px;font-weight:normal;color:#1e1e1e;transform:scaleX(0.893);">PLIEGO</span>
<span class="t" style="left:1655.4px;top:471.2px;font-size:14.5px;font-weight:normal;color:#1e1e1e;transform:scaleX(0.911);">01_CUT</span>
<span class="t" style="left:1655.4px;top:494.8px;font-size:14.5px;font-weight:normal;color:#1e1e1e;transform:scaleX(0.925);">02_CUTTWO</span>
<span class="t" style="left:1655.4px;top:518.5px;font-size:14.5px;font-weight:normal;color:#1e1e1e;transform:scaleX(0.887);">SRF 1 FEM</span>
<span class="t" style="left:1655.4px;top:542.2px;font-size:14.5px;font-weight:normal;color:#1e1e1e;transform:scaleX(0.917);">SURF 2 MALE</span>
<span class="t" style="left:1655.4px;top:565.8px;font-size:14.5px;font-weight:bold;color:#ffffff;transform:scaleX(0.950);">SURF 3 LAYER</span>
</body></html>
